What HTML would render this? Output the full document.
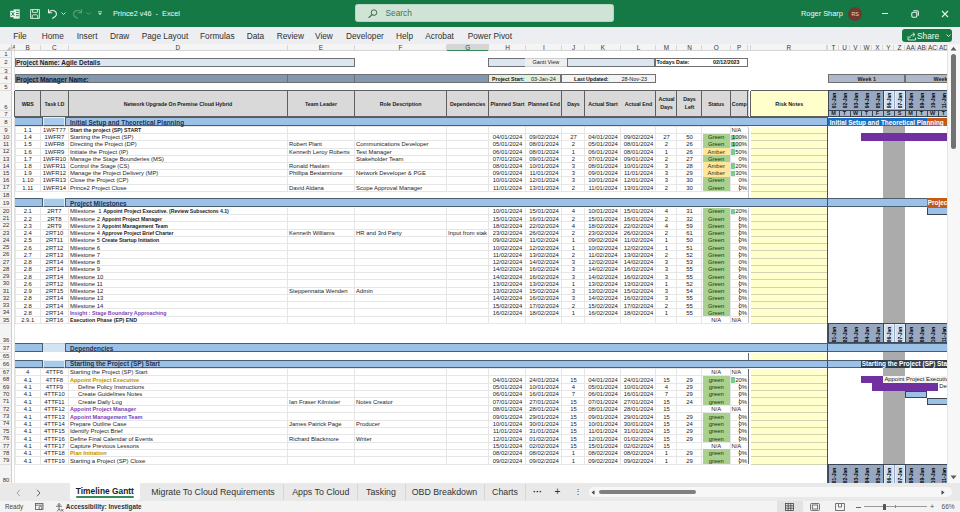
<!DOCTYPE html><html><head><meta charset="utf-8"><style>
html,body{margin:0;padding:0;width:960px;height:512px;overflow:hidden;background:#fff;font-family:"Liberation Sans",sans-serif;}
div{position:absolute;box-sizing:border-box;}
.t{white-space:nowrap;overflow:visible;}
</style></head><body>
<div style="left:0px;top:0px;width:960px;height:26.5px;background:#147945"></div>
<svg style="position:absolute;left:10px;top:8.5px" width="10" height="10" viewBox="0 0 10 10"><path d="M3.5 0.3h6.2v9.4H3.5z" fill="#d9f2e2"/><path d="M6 2.3h2.8M6 4.5h2.8M6 6.7h2.8" stroke="#147945" stroke-width="0.9"/><path d="M0.2 1.8h5.6v6.4H0.2z" fill="#e6f7ec"/><path d="M1.4 3l3 3.9M4.4 3l-3 3.9" stroke="#147945" stroke-width="0.95"/></svg>
<svg style="position:absolute;left:30px;top:8.5px" width="10" height="10" viewBox="0 0 10 10"><g fill="none" stroke="#d9f2e2" stroke-width="0.95"><path d="M0.6 0.6h8.8v8.8H0.6z"/><path d="M2.6 0.6v2.8h4.8V0.6"/><path d="M2.2 9.4V6.8c0-0.6 0.4-1 1-1h3.6c0.6 0 1 0.4 1 1v2.6"/></g></svg>
<svg style="position:absolute;left:47px;top:8px" width="11" height="11" viewBox="0 0 11 11"><g fill="none" stroke="#e8f3ec" stroke-width="1.1" stroke-linecap="round"><path d="M1.5 1.5v3.3h3.3"/><path d="M1.8 4.6C3 2.6 5.5 1.8 7.6 2.9c2.3 1.3 2.3 4.2 0.6 5.6L5.6 10.3"/></g></svg>
<svg style="position:absolute;left:61px;top:12px" width="5" height="3" viewBox="0 0 5 3"><path d="M0.5 0.5l2 2 2-2" fill="none" stroke="#e8f3ec" stroke-width="0.9"/></svg>
<svg style="position:absolute;left:72px;top:8px" width="11" height="11" viewBox="0 0 11 11"><g fill="none" stroke="#5ba27a" stroke-width="1.1" stroke-linecap="round"><path d="M9.5 1.5v3.3H6.2"/><path d="M9.2 4.6C8 2.6 5.5 1.8 3.4 2.9c-2.3 1.3-2.3 4.2-0.6 5.6L5.4 10.3"/></g></svg>
<svg style="position:absolute;left:86px;top:12px" width="5" height="3" viewBox="0 0 5 3"><path d="M0.5 0.5l2 2 2-2" fill="none" stroke="#5ba27a" stroke-width="0.9"/></svg>
<svg style="position:absolute;left:97px;top:11px" width="6" height="5" viewBox="0 0 6 5"><path d="M1 0.8h4" stroke="#e8f3ec" stroke-width="0.8"/><path d="M1.2 2.3l1.8 1.8 1.8-1.8z" fill="#e8f3ec"/></svg>
<div class="t" style="left:113px;top:5.8px;width:77px;height:16px;line-height:16px;font-size:7.3px;font-weight:400;color:#f4faf6;text-align:left;padding:0 0px;">Prince2 v46&nbsp; -&nbsp; Excel</div>
<div style="left:355.3px;top:4.1px;width:259px;height:18.1px;background:#cfe4d5;border-radius:2.5px;border:0.6px solid #b7d6c1"></div>
<svg style="position:absolute;left:368px;top:9px" width="10" height="9" viewBox="0 0 10 9"><circle cx="6" cy="3.6" r="2.8" fill="none" stroke="#3f6a4f" stroke-width="1"/><path d="M4 5.6L1 8.5" stroke="#3f6a4f" stroke-width="1.1" stroke-linecap="round"/></svg>
<div class="t" style="left:385.5px;top:4px;width:54.5px;height:18px;line-height:18px;font-size:8.3px;font-weight:400;color:#47705a;text-align:left;padding:0 0px;">Search</div>
<div class="t" style="left:801px;top:5.6px;width:44px;height:16px;line-height:16px;font-size:7.4px;font-weight:400;color:#f4faf6;text-align:left;padding:0 0px;">Roger Sharp</div>
<div style="left:848px;top:6.5px;width:14.4px;height:14.4px;border-radius:50%;background:#6d3a30;color:#f1d6d0;font-size:5.4px;line-height:14.4px;text-align:center;">RS</div>
<div style="left:881.8px;top:12.6px;width:6.6px;height:1.3px;background:#e8f3ec"></div>
<svg style="position:absolute;left:911px;top:9.5px" width="8" height="8" viewBox="0 0 8 8"><g fill="none" stroke="#e8f3ec" stroke-width="1.1"><rect x="0.8" y="2.2" width="5" height="5" rx="1.2"/><path d="M2.4 0.8h3.6a1.3 1.3 0 0 1 1.3 1.3v3.6"/></g></svg>
<svg style="position:absolute;left:941px;top:9.6px" width="8" height="8" viewBox="0 0 8 8"><path d="M1 1l6 6M7 1L1 7" stroke="#e8f3ec" stroke-width="1.1"/></svg>
<div style="left:0px;top:26.5px;width:960px;height:17.5px;background:#eceef1"></div>
<div class="t" style="left:13.3px;top:28.5px;width:80px;height:15px;line-height:15px;font-size:8.3px;font-weight:400;color:#303030;text-align:left;padding:0 0px;">File</div>
<div class="t" style="left:41.7px;top:28.5px;width:80px;height:15px;line-height:15px;font-size:8.3px;font-weight:400;color:#303030;text-align:left;padding:0 0px;">Home</div>
<div class="t" style="left:76.7px;top:28.5px;width:80px;height:15px;line-height:15px;font-size:8.3px;font-weight:400;color:#303030;text-align:left;padding:0 0px;">Insert</div>
<div class="t" style="left:110px;top:28.5px;width:80px;height:15px;line-height:15px;font-size:8.3px;font-weight:400;color:#303030;text-align:left;padding:0 0px;">Draw</div>
<div class="t" style="left:141.7px;top:28.5px;width:80px;height:15px;line-height:15px;font-size:8.3px;font-weight:400;color:#303030;text-align:left;padding:0 0px;">Page Layout</div>
<div class="t" style="left:200px;top:28.5px;width:80px;height:15px;line-height:15px;font-size:8.3px;font-weight:400;color:#303030;text-align:left;padding:0 0px;">Formulas</div>
<div class="t" style="left:246.7px;top:28.5px;width:80px;height:15px;line-height:15px;font-size:8.3px;font-weight:400;color:#303030;text-align:left;padding:0 0px;">Data</div>
<div class="t" style="left:276.7px;top:28.5px;width:80px;height:15px;line-height:15px;font-size:8.3px;font-weight:400;color:#303030;text-align:left;padding:0 0px;">Review</div>
<div class="t" style="left:315px;top:28.5px;width:80px;height:15px;line-height:15px;font-size:8.3px;font-weight:400;color:#303030;text-align:left;padding:0 0px;">View</div>
<div class="t" style="left:346px;top:28.5px;width:80px;height:15px;line-height:15px;font-size:8.3px;font-weight:400;color:#303030;text-align:left;padding:0 0px;">Developer</div>
<div class="t" style="left:396px;top:28.5px;width:80px;height:15px;line-height:15px;font-size:8.3px;font-weight:400;color:#303030;text-align:left;padding:0 0px;">Help</div>
<div class="t" style="left:425.3px;top:28.5px;width:80px;height:15px;line-height:15px;font-size:8.3px;font-weight:400;color:#303030;text-align:left;padding:0 0px;">Acrobat</div>
<div class="t" style="left:467.7px;top:28.5px;width:80px;height:15px;line-height:15px;font-size:8.3px;font-weight:400;color:#303030;text-align:left;padding:0 0px;">Power Pivot</div>
<div style="left:902.2px;top:29px;width:50px;height:12.8px;background:#137a43;border-radius:3px"></div>
<svg style="position:absolute;left:906.5px;top:30.5px" width="10" height="10" viewBox="0 0 10 10"><g fill="none" stroke="#e8f3ec" stroke-width="0.9" stroke-linejoin="round"><path d="M1 5.2v3.8h7.6V6.6"/><path d="M2.6 7.2c0.3-2.4 2-3.6 4.4-3.6"/><path d="M5.8 1.6L8 3.6 5.8 5.6"/></g></svg>
<div class="t" style="left:917px;top:29.8px;width:28px;height:12.8px;line-height:12.8px;font-size:8.3px;font-weight:400;color:#f4faf6;text-align:left;padding:0 0px;">Share</div>
<svg style="position:absolute;left:945.5px;top:34px" width="5" height="3" viewBox="0 0 5 3"><path d="M0.5 0.5l2 2 2-2" fill="none" stroke="#e8f3ec" stroke-width="0.9"/></svg>
<div style="left:0px;top:44px;width:947px;height:439px;background:#ffffff"></div>
<div style="left:0px;top:44px;width:947px;height:7px;background:#f4f4f4;border-bottom:0.7px solid #d4d4d4"></div>
<div style="left:446.5px;top:44px;width:42.5px;height:7px;background:#d6d6d6;border-bottom:1px solid #2f8a57"></div>
<div style="left:14px;top:45px;width:1px;height:6px;background:#d6d6d6"></div>
<div style="left:40px;top:45px;width:1px;height:6px;background:#d6d6d6"></div>
<div class="t" style="left:15px;top:43.6px;width:25.5px;height:7px;line-height:7px;font-size:6.4px;font-weight:400;color:#383838;text-align:center;padding:0 0px;">B</div>
<div style="left:68px;top:45px;width:1px;height:6px;background:#d6d6d6"></div>
<div class="t" style="left:40.5px;top:43.6px;width:27.8px;height:7px;line-height:7px;font-size:6.4px;font-weight:400;color:#383838;text-align:center;padding:0 0px;">C</div>
<div style="left:287px;top:45px;width:1px;height:6px;background:#d6d6d6"></div>
<div class="t" style="left:68.3px;top:43.6px;width:219.2px;height:7px;line-height:7px;font-size:6.4px;font-weight:400;color:#383838;text-align:center;padding:0 0px;">D</div>
<div style="left:354px;top:45px;width:1px;height:6px;background:#d6d6d6"></div>
<div class="t" style="left:287.5px;top:43.6px;width:67px;height:7px;line-height:7px;font-size:6.4px;font-weight:400;color:#383838;text-align:center;padding:0 0px;">E</div>
<div style="left:446px;top:45px;width:1px;height:6px;background:#d6d6d6"></div>
<div class="t" style="left:354.5px;top:43.6px;width:92px;height:7px;line-height:7px;font-size:6.4px;font-weight:400;color:#383838;text-align:center;padding:0 0px;">F</div>
<div style="left:488px;top:45px;width:1px;height:6px;background:#d6d6d6"></div>
<div class="t" style="left:446.5px;top:43.6px;width:42.5px;height:7px;line-height:7px;font-size:6.4px;font-weight:400;color:#383838;text-align:center;padding:0 0px;">G</div>
<div style="left:525px;top:45px;width:1px;height:6px;background:#d6d6d6"></div>
<div class="t" style="left:489px;top:43.6px;width:37px;height:7px;line-height:7px;font-size:6.4px;font-weight:400;color:#383838;text-align:center;padding:0 0px;">H</div>
<div style="left:561px;top:45px;width:1px;height:6px;background:#d6d6d6"></div>
<div class="t" style="left:526px;top:43.6px;width:36px;height:7px;line-height:7px;font-size:6.4px;font-weight:400;color:#383838;text-align:center;padding:0 0px;">I</div>
<div style="left:584px;top:45px;width:1px;height:6px;background:#d6d6d6"></div>
<div class="t" style="left:562px;top:43.6px;width:23px;height:7px;line-height:7px;font-size:6.4px;font-weight:400;color:#383838;text-align:center;padding:0 0px;">J</div>
<div style="left:620px;top:45px;width:1px;height:6px;background:#d6d6d6"></div>
<div class="t" style="left:585px;top:43.6px;width:36px;height:7px;line-height:7px;font-size:6.4px;font-weight:400;color:#383838;text-align:center;padding:0 0px;">K</div>
<div style="left:655px;top:45px;width:1px;height:6px;background:#d6d6d6"></div>
<div class="t" style="left:621px;top:43.6px;width:35px;height:7px;line-height:7px;font-size:6.4px;font-weight:400;color:#383838;text-align:center;padding:0 0px;">L</div>
<div style="left:676px;top:45px;width:1px;height:6px;background:#d6d6d6"></div>
<div class="t" style="left:656px;top:43.6px;width:21px;height:7px;line-height:7px;font-size:6.4px;font-weight:400;color:#383838;text-align:center;padding:0 0px;">M</div>
<div style="left:701px;top:45px;width:1px;height:6px;background:#d6d6d6"></div>
<div class="t" style="left:677px;top:43.6px;width:25px;height:7px;line-height:7px;font-size:6.4px;font-weight:400;color:#383838;text-align:center;padding:0 0px;">N</div>
<div style="left:730px;top:45px;width:1px;height:6px;background:#d6d6d6"></div>
<div class="t" style="left:702px;top:43.6px;width:28.4px;height:7px;line-height:7px;font-size:6.4px;font-weight:400;color:#383838;text-align:center;padding:0 0px;">O</div>
<div style="left:747px;top:45px;width:1px;height:6px;background:#d6d6d6"></div>
<div class="t" style="left:730.4px;top:43.6px;width:17.6px;height:7px;line-height:7px;font-size:6.4px;font-weight:400;color:#383838;text-align:center;padding:0 0px;">P</div>
<div style="left:750px;top:45px;width:1px;height:6px;background:#d6d6d6"></div>
<div style="left:826px;top:45px;width:1px;height:6px;background:#d6d6d6"></div>
<div class="t" style="left:750.5px;top:43.6px;width:76.5px;height:7px;line-height:7px;font-size:6.4px;font-weight:400;color:#383838;text-align:center;padding:0 0px;">R</div>
<div style="left:827px;top:45px;width:1px;height:6px;background:#d6d6d6"></div>
<div style="left:838px;top:45px;width:1px;height:6px;background:#d6d6d6"></div>
<div class="t" style="left:828px;top:43.6px;width:11px;height:7px;line-height:7px;font-size:6.4px;font-weight:400;color:#383838;text-align:center;padding:0 0px;">T</div>
<div style="left:849px;top:45px;width:1px;height:6px;background:#d6d6d6"></div>
<div class="t" style="left:839px;top:43.6px;width:11px;height:7px;line-height:7px;font-size:6.4px;font-weight:400;color:#383838;text-align:center;padding:0 0px;">U</div>
<div style="left:860px;top:45px;width:1px;height:6px;background:#d6d6d6"></div>
<div class="t" style="left:850px;top:43.6px;width:11px;height:7px;line-height:7px;font-size:6.4px;font-weight:400;color:#383838;text-align:center;padding:0 0px;">V</div>
<div style="left:871px;top:45px;width:1px;height:6px;background:#d6d6d6"></div>
<div class="t" style="left:861px;top:43.6px;width:11px;height:7px;line-height:7px;font-size:6.4px;font-weight:400;color:#383838;text-align:center;padding:0 0px;">W</div>
<div style="left:882px;top:45px;width:1px;height:6px;background:#d6d6d6"></div>
<div class="t" style="left:872px;top:43.6px;width:11px;height:7px;line-height:7px;font-size:6.4px;font-weight:400;color:#383838;text-align:center;padding:0 0px;">X</div>
<div style="left:893px;top:45px;width:1px;height:6px;background:#d6d6d6"></div>
<div class="t" style="left:883px;top:43.6px;width:11px;height:7px;line-height:7px;font-size:6.4px;font-weight:400;color:#383838;text-align:center;padding:0 0px;">Y</div>
<div style="left:904px;top:45px;width:1px;height:6px;background:#d6d6d6"></div>
<div class="t" style="left:894px;top:43.6px;width:11px;height:7px;line-height:7px;font-size:6.4px;font-weight:400;color:#383838;text-align:center;padding:0 0px;">Z</div>
<div style="left:915px;top:45px;width:1px;height:6px;background:#d6d6d6"></div>
<div class="t" style="left:905px;top:43.6px;width:11px;height:7px;line-height:7px;font-size:6.4px;font-weight:400;color:#383838;text-align:center;padding:0 0px;">AA</div>
<div style="left:926px;top:45px;width:1px;height:6px;background:#d6d6d6"></div>
<div class="t" style="left:916px;top:43.6px;width:11px;height:7px;line-height:7px;font-size:6.4px;font-weight:400;color:#383838;text-align:center;padding:0 0px;">AB</div>
<div style="left:937px;top:45px;width:1px;height:6px;background:#d6d6d6"></div>
<div class="t" style="left:927px;top:43.6px;width:11px;height:7px;line-height:7px;font-size:6.4px;font-weight:400;color:#383838;text-align:center;padding:0 0px;">AC</div>
<div style="left:948px;top:45px;width:1px;height:6px;background:#d6d6d6"></div>
<div class="t" style="left:938px;top:43.6px;width:11px;height:7px;line-height:7px;font-size:6.4px;font-weight:400;color:#383838;text-align:center;padding:0 0px;">AD</div>
<div class="t" style="left:12.3px;top:44px;width:2.7px;height:7px;line-height:7px;font-size:5.5px;font-weight:400;color:#454545;text-align:left;padding:0 0px;overflow:hidden">A</div>
<svg style="position:absolute;left:5px;top:46px" width="6" height="5" viewBox="0 0 6 5"><path d="M5.5 0.5v4h-4z" fill="#b8b8b8"/></svg>
<div style="left:0px;top:51px;width:12px;height:432px;background:#f4f4f4"></div>
<div style="left:11px;top:44px;width:1px;height:439px;background:#cdcdcd"></div>
<div style="left:14px;top:51px;width:1px;height:432px;background:#e2e2e2"></div>
<div style="left:0px;top:57px;width:12px;height:1px;background:#dedede"></div>
<div class="t" style="left:0px;top:50.7px;width:12px;height:7.4px;line-height:7.4px;font-size:6px;font-weight:400;color:#333;text-align:center;padding:0 0px;">1</div>
<div style="left:0px;top:67px;width:12px;height:1px;background:#dedede"></div>
<div class="t" style="left:0px;top:58.1px;width:12px;height:9.7px;line-height:9.7px;font-size:6px;font-weight:400;color:#333;text-align:center;padding:0 0px;">2</div>
<div style="left:0px;top:73px;width:12px;height:1px;background:#dedede"></div>
<div class="t" style="left:0px;top:67.8px;width:12px;height:6.4px;line-height:6.4px;font-size:6px;font-weight:400;color:#333;text-align:center;padding:0 0px;">3</div>
<div style="left:0px;top:83px;width:12px;height:1px;background:#dedede"></div>
<div class="t" style="left:0px;top:74.2px;width:12px;height:9.7px;line-height:9.7px;font-size:6px;font-weight:400;color:#333;text-align:center;padding:0 0px;">4</div>
<div style="left:0px;top:90px;width:12px;height:1px;background:#dedede"></div>
<div class="t" style="left:0px;top:83.9px;width:12px;height:6.9px;line-height:6.9px;font-size:6px;font-weight:400;color:#333;text-align:center;padding:0 0px;">5</div>
<div style="left:0px;top:110px;width:12px;height:1px;background:#dedede"></div>
<div class="t" style="left:0px;top:103.8px;width:12px;height:7.5px;line-height:7.5px;font-size:6px;font-weight:400;color:#333;text-align:center;padding:0 0px;">6</div>
<div style="left:0px;top:117px;width:12px;height:1px;background:#dedede"></div>
<div class="t" style="left:0px;top:110.6px;width:12px;height:7.1px;line-height:7.1px;font-size:6px;font-weight:400;color:#333;text-align:center;padding:0 0px;">7</div>
<div style="left:0px;top:126px;width:12px;height:1px;background:#dedede"></div>
<div class="t" style="left:0px;top:117.7px;width:12px;height:9.2px;line-height:9.2px;font-size:6px;font-weight:400;color:#333;text-align:center;padding:0 0px;">8</div>
<div style="left:0px;top:133px;width:12px;height:1px;background:#dedede"></div>
<div class="t" style="left:0px;top:126.9px;width:12px;height:7.19px;line-height:7.19px;font-size:6px;font-weight:400;color:#333;text-align:center;padding:0 0px;">9</div>
<div style="left:0px;top:140px;width:12px;height:1px;background:#dedede"></div>
<div class="t" style="left:0px;top:134.09px;width:12px;height:7.19px;line-height:7.19px;font-size:6px;font-weight:400;color:#333;text-align:center;padding:0 0px;">10</div>
<div style="left:0px;top:148px;width:12px;height:1px;background:#dedede"></div>
<div class="t" style="left:0px;top:141.28px;width:12px;height:7.19px;line-height:7.19px;font-size:6px;font-weight:400;color:#333;text-align:center;padding:0 0px;">11</div>
<div style="left:0px;top:155px;width:12px;height:1px;background:#dedede"></div>
<div class="t" style="left:0px;top:148.47px;width:12px;height:7.19px;line-height:7.19px;font-size:6px;font-weight:400;color:#333;text-align:center;padding:0 0px;">12</div>
<div style="left:0px;top:162px;width:12px;height:1px;background:#dedede"></div>
<div class="t" style="left:0px;top:155.66px;width:12px;height:7.19px;line-height:7.19px;font-size:6px;font-weight:400;color:#333;text-align:center;padding:0 0px;">13</div>
<div style="left:0px;top:169px;width:12px;height:1px;background:#dedede"></div>
<div class="t" style="left:0px;top:162.85px;width:12px;height:7.19px;line-height:7.19px;font-size:6px;font-weight:400;color:#333;text-align:center;padding:0 0px;">14</div>
<div style="left:0px;top:176px;width:12px;height:1px;background:#dedede"></div>
<div class="t" style="left:0px;top:170.04px;width:12px;height:7.19px;line-height:7.19px;font-size:6px;font-weight:400;color:#333;text-align:center;padding:0 0px;">15</div>
<div style="left:0px;top:184px;width:12px;height:1px;background:#dedede"></div>
<div class="t" style="left:0px;top:177.23px;width:12px;height:7.19px;line-height:7.19px;font-size:6px;font-weight:400;color:#333;text-align:center;padding:0 0px;">16</div>
<div style="left:0px;top:191px;width:12px;height:1px;background:#dedede"></div>
<div class="t" style="left:0px;top:184.42px;width:12px;height:7.19px;line-height:7.19px;font-size:6px;font-weight:400;color:#333;text-align:center;padding:0 0px;">17</div>
<div style="left:0px;top:198px;width:12px;height:1px;background:#dedede"></div>
<div class="t" style="left:0px;top:191.61px;width:12px;height:7.09px;line-height:7.09px;font-size:6px;font-weight:400;color:#333;text-align:center;padding:0 0px;">18</div>
<div style="left:0px;top:207px;width:12px;height:1px;background:#dedede"></div>
<div class="t" style="left:0px;top:198.7px;width:12px;height:9.2px;line-height:9.2px;font-size:6px;font-weight:400;color:#333;text-align:center;padding:0 0px;">19</div>
<div style="left:0px;top:214px;width:12px;height:1px;background:#dedede"></div>
<div class="t" style="left:0px;top:207.9px;width:12px;height:7.24px;line-height:7.24px;font-size:6px;font-weight:400;color:#333;text-align:center;padding:0 0px;">20</div>
<div style="left:0px;top:221px;width:12px;height:1px;background:#dedede"></div>
<div class="t" style="left:0px;top:215.14px;width:12px;height:7.24px;line-height:7.24px;font-size:6px;font-weight:400;color:#333;text-align:center;padding:0 0px;">21</div>
<div style="left:0px;top:229px;width:12px;height:1px;background:#dedede"></div>
<div class="t" style="left:0px;top:222.38px;width:12px;height:7.24px;line-height:7.24px;font-size:6px;font-weight:400;color:#333;text-align:center;padding:0 0px;">22</div>
<div style="left:0px;top:236px;width:12px;height:1px;background:#dedede"></div>
<div class="t" style="left:0px;top:229.62px;width:12px;height:7.24px;line-height:7.24px;font-size:6px;font-weight:400;color:#333;text-align:center;padding:0 0px;">23</div>
<div style="left:0px;top:243px;width:12px;height:1px;background:#dedede"></div>
<div class="t" style="left:0px;top:236.86px;width:12px;height:7.24px;line-height:7.24px;font-size:6px;font-weight:400;color:#333;text-align:center;padding:0 0px;">24</div>
<div style="left:0px;top:250px;width:12px;height:1px;background:#dedede"></div>
<div class="t" style="left:0px;top:244.1px;width:12px;height:7.24px;line-height:7.24px;font-size:6px;font-weight:400;color:#333;text-align:center;padding:0 0px;">25</div>
<div style="left:0px;top:258px;width:12px;height:1px;background:#dedede"></div>
<div class="t" style="left:0px;top:251.34px;width:12px;height:7.24px;line-height:7.24px;font-size:6px;font-weight:400;color:#333;text-align:center;padding:0 0px;">26</div>
<div style="left:0px;top:265px;width:12px;height:1px;background:#dedede"></div>
<div class="t" style="left:0px;top:258.58px;width:12px;height:7.24px;line-height:7.24px;font-size:6px;font-weight:400;color:#333;text-align:center;padding:0 0px;">27</div>
<div style="left:0px;top:272px;width:12px;height:1px;background:#dedede"></div>
<div class="t" style="left:0px;top:265.82px;width:12px;height:7.24px;line-height:7.24px;font-size:6px;font-weight:400;color:#333;text-align:center;padding:0 0px;">28</div>
<div style="left:0px;top:279px;width:12px;height:1px;background:#dedede"></div>
<div class="t" style="left:0px;top:273.06px;width:12px;height:7.24px;line-height:7.24px;font-size:6px;font-weight:400;color:#333;text-align:center;padding:0 0px;">29</div>
<div style="left:0px;top:287px;width:12px;height:1px;background:#dedede"></div>
<div class="t" style="left:0px;top:280.3px;width:12px;height:7.24px;line-height:7.24px;font-size:6px;font-weight:400;color:#333;text-align:center;padding:0 0px;">30</div>
<div style="left:0px;top:294px;width:12px;height:1px;background:#dedede"></div>
<div class="t" style="left:0px;top:287.54px;width:12px;height:7.24px;line-height:7.24px;font-size:6px;font-weight:400;color:#333;text-align:center;padding:0 0px;">31</div>
<div style="left:0px;top:301px;width:12px;height:1px;background:#dedede"></div>
<div class="t" style="left:0px;top:294.78px;width:12px;height:7.24px;line-height:7.24px;font-size:6px;font-weight:400;color:#333;text-align:center;padding:0 0px;">32</div>
<div style="left:0px;top:308px;width:12px;height:1px;background:#dedede"></div>
<div class="t" style="left:0px;top:302.02px;width:12px;height:7.24px;line-height:7.24px;font-size:6px;font-weight:400;color:#333;text-align:center;padding:0 0px;">33</div>
<div style="left:0px;top:316px;width:12px;height:1px;background:#dedede"></div>
<div class="t" style="left:0px;top:309.26px;width:12px;height:7.24px;line-height:7.24px;font-size:6px;font-weight:400;color:#333;text-align:center;padding:0 0px;">34</div>
<div style="left:0px;top:323px;width:12px;height:1px;background:#dedede"></div>
<div class="t" style="left:0px;top:316.5px;width:12px;height:7.24px;line-height:7.24px;font-size:6px;font-weight:400;color:#333;text-align:center;padding:0 0px;">35</div>
<div style="left:0px;top:343px;width:12px;height:1px;background:#dedede"></div>
<div class="t" style="left:0px;top:336.9px;width:12px;height:7.5px;line-height:7.5px;font-size:6px;font-weight:400;color:#333;text-align:center;padding:0 0px;">36</div>
<div style="left:0px;top:352px;width:12px;height:1px;background:#dedede"></div>
<div class="t" style="left:0px;top:343.7px;width:12px;height:9.2px;line-height:9.2px;font-size:6px;font-weight:400;color:#333;text-align:center;padding:0 0px;">37</div>
<div style="left:0px;top:359px;width:12px;height:1px;background:#dedede"></div>
<div class="t" style="left:0px;top:352.9px;width:12px;height:7.1px;line-height:7.1px;font-size:6px;font-weight:400;color:#333;text-align:center;padding:0 0px;">65</div>
<div style="left:0px;top:368px;width:12px;height:1px;background:#dedede"></div>
<div class="t" style="left:0px;top:360px;width:12px;height:8.9px;line-height:8.9px;font-size:6px;font-weight:400;color:#333;text-align:center;padding:0 0px;">66</div>
<div style="left:0px;top:375px;width:12px;height:1px;background:#dedede"></div>
<div class="t" style="left:0px;top:368.9px;width:12px;height:7.36px;line-height:7.36px;font-size:6px;font-weight:400;color:#333;text-align:center;padding:0 0px;">67</div>
<div style="left:0px;top:383px;width:12px;height:1px;background:#dedede"></div>
<div class="t" style="left:0px;top:376.26px;width:12px;height:7.36px;line-height:7.36px;font-size:6px;font-weight:400;color:#333;text-align:center;padding:0 0px;">68</div>
<div style="left:0px;top:390px;width:12px;height:1px;background:#dedede"></div>
<div class="t" style="left:0px;top:383.62px;width:12px;height:7.36px;line-height:7.36px;font-size:6px;font-weight:400;color:#333;text-align:center;padding:0 0px;">69</div>
<div style="left:0px;top:397px;width:12px;height:1px;background:#dedede"></div>
<div class="t" style="left:0px;top:390.98px;width:12px;height:7.36px;line-height:7.36px;font-size:6px;font-weight:400;color:#333;text-align:center;padding:0 0px;">70</div>
<div style="left:0px;top:405px;width:12px;height:1px;background:#dedede"></div>
<div class="t" style="left:0px;top:398.34px;width:12px;height:7.36px;line-height:7.36px;font-size:6px;font-weight:400;color:#333;text-align:center;padding:0 0px;">71</div>
<div style="left:0px;top:412px;width:12px;height:1px;background:#dedede"></div>
<div class="t" style="left:0px;top:405.7px;width:12px;height:7.36px;line-height:7.36px;font-size:6px;font-weight:400;color:#333;text-align:center;padding:0 0px;">72</div>
<div style="left:0px;top:420px;width:12px;height:1px;background:#dedede"></div>
<div class="t" style="left:0px;top:413.06px;width:12px;height:7.36px;line-height:7.36px;font-size:6px;font-weight:400;color:#333;text-align:center;padding:0 0px;">73</div>
<div style="left:0px;top:427px;width:12px;height:1px;background:#dedede"></div>
<div class="t" style="left:0px;top:420.42px;width:12px;height:7.36px;line-height:7.36px;font-size:6px;font-weight:400;color:#333;text-align:center;padding:0 0px;">74</div>
<div style="left:0px;top:434px;width:12px;height:1px;background:#dedede"></div>
<div class="t" style="left:0px;top:427.78px;width:12px;height:7.36px;line-height:7.36px;font-size:6px;font-weight:400;color:#333;text-align:center;padding:0 0px;">75</div>
<div style="left:0px;top:442px;width:12px;height:1px;background:#dedede"></div>
<div class="t" style="left:0px;top:435.14px;width:12px;height:7.36px;line-height:7.36px;font-size:6px;font-weight:400;color:#333;text-align:center;padding:0 0px;">76</div>
<div style="left:0px;top:449px;width:12px;height:1px;background:#dedede"></div>
<div class="t" style="left:0px;top:442.5px;width:12px;height:7.36px;line-height:7.36px;font-size:6px;font-weight:400;color:#333;text-align:center;padding:0 0px;">77</div>
<div style="left:0px;top:456px;width:12px;height:1px;background:#dedede"></div>
<div class="t" style="left:0px;top:449.86px;width:12px;height:7.36px;line-height:7.36px;font-size:6px;font-weight:400;color:#333;text-align:center;padding:0 0px;">78</div>
<div style="left:0px;top:464px;width:12px;height:1px;background:#dedede"></div>
<div class="t" style="left:0px;top:457.22px;width:12px;height:7.36px;line-height:7.36px;font-size:6px;font-weight:400;color:#333;text-align:center;padding:0 0px;">79</div>
<div style="left:0px;top:483px;width:12px;height:1px;background:#dedede"></div>
<div class="t" style="left:0px;top:476.6px;width:12px;height:7.5px;line-height:7.5px;font-size:6px;font-weight:400;color:#333;text-align:center;padding:0 0px;">80</div>
<div style="left:15px;top:57.7px;width:339.5px;height:9.7px;background:#dce6f2;border:0.8px solid #707070"></div>
<div class="t" style="left:15.5px;top:58px;width:184.5px;height:9.7px;line-height:9.7px;font-size:6.5px;font-weight:700;color:#1b1b2b;text-align:left;padding:0 0.5px;">Project Name: Agile Details</div>
<div style="left:488.2px;top:57.8px;width:37px;height:9.4px;background:#dce6f2;border:0.8px solid #707070;border-right:none"></div>
<div style="left:525.2px;top:57.8px;width:41.4px;height:9.4px;background:#efefef;border-top:0.9px solid #cfcfcf;border-bottom:0.9px solid #cfcfcf"></div>
<div class="t" style="left:525.2px;top:58.3px;width:41.4px;height:9.4px;line-height:9.4px;font-size:5.5px;font-weight:400;color:#222;text-align:center;padding:0 0px;">Gantt View</div>
<div style="left:566.6px;top:57.8px;width:88.4px;height:9.4px;background:#dce6f2;border:0.8px solid #707070"></div>
<div style="left:655px;top:57.8px;width:93.2px;height:9.4px;background:#ffffff;border:0.8px solid #707070"></div>
<div class="t" style="left:656px;top:58.3px;width:44px;height:9.4px;line-height:9.4px;font-size:5.3px;font-weight:700;color:#111;text-align:left;padding:0 0.5px;">Todays Date:</div>
<div class="t" style="left:700px;top:58.3px;width:47px;height:9.4px;line-height:9.4px;font-size:5.3px;font-weight:700;color:#111;text-align:right;padding:0 7.5px;">02/12/2023</div>
<div style="left:15px;top:73.9px;width:473.5px;height:9.3px;background:#8497b0;border:0.8px solid #707070"></div>
<div style="left:287.2px;top:73.9px;width:0.8px;height:9.3px;background:#707070"></div>
<div style="left:354.2px;top:73.9px;width:0.8px;height:9.3px;background:#707070"></div>
<div class="t" style="left:15.5px;top:74.5px;width:184.5px;height:9.3px;line-height:9.3px;font-size:6.55px;font-weight:700;color:#101828;text-align:left;padding:0 0.5px;">Project Manager Name:</div>
<div style="left:488.2px;top:73.9px;width:72.8px;height:9.3px;background:#e2efda;border:0.8px solid #707070"></div>
<div class="t" style="left:488.5px;top:74.7px;width:41.5px;height:9.3px;line-height:9.3px;font-size:5.2px;font-weight:700;color:#111;text-align:left;padding:0 3.5px;">Project Start:</div>
<div class="t" style="left:528px;top:74.7px;width:32px;height:9.3px;line-height:9.3px;font-size:5.5px;font-weight:400;color:#222;text-align:left;padding:0 3px;">03-Jan-24</div>
<div style="left:561px;top:73.9px;width:94.8px;height:9.3px;background:#f3f3f3;border:0.8px solid #707070"></div>
<div class="t" style="left:561px;top:74.7px;width:51px;height:9.3px;line-height:9.3px;font-size:5.2px;font-weight:700;color:#111;text-align:left;padding:0 13px;">Last Updated:</div>
<div class="t" style="left:612px;top:74.7px;width:43px;height:9.3px;line-height:9.3px;font-size:5.5px;font-weight:400;color:#222;text-align:left;padding:0 9.4px;">28-Nov-23</div>
<div style="left:828.2px;top:74.2px;width:77.1px;height:9px;background:#adb9ca;border:0.8px solid #707070"></div>
<div class="t" style="left:828.2px;top:75px;width:77.1px;height:9px;line-height:9px;font-size:5.4px;font-weight:700;color:#1a1a1a;text-align:center;padding:0 0px;">Week 1</div>
<div style="left:905.3px;top:74.2px;width:54.7px;height:9px;background:#adb9ca;border:0.8px solid #707070"></div>
<div class="t" style="left:905.3px;top:75px;width:74.7px;height:9px;line-height:9px;font-size:5.4px;font-weight:700;color:#1a1a1a;text-align:center;padding:0 0px;">Week 2</div>
<div style="left:15px;top:90.5px;width:733.6px;height:26.7px;background:#d9d9d9"></div>
<div style="left:15px;top:90px;width:733.6px;height:1px;background:#5f5f5f"></div>
<div style="left:15px;top:116px;width:733.6px;height:1px;background:#5f5f5f"></div>
<div style="left:14px;top:90.5px;width:1px;height:26.7px;background:#5f5f5f"></div>
<div style="left:40px;top:90.5px;width:1px;height:26.7px;background:#5f5f5f"></div>
<div style="left:68px;top:90.5px;width:1px;height:26.7px;background:#5f5f5f"></div>
<div style="left:287px;top:90.5px;width:1px;height:26.7px;background:#5f5f5f"></div>
<div style="left:354px;top:90.5px;width:1px;height:26.7px;background:#5f5f5f"></div>
<div style="left:446px;top:90.5px;width:1px;height:26.7px;background:#5f5f5f"></div>
<div style="left:488px;top:90.5px;width:1px;height:26.7px;background:#5f5f5f"></div>
<div style="left:561px;top:90.5px;width:1px;height:26.7px;background:#5f5f5f"></div>
<div style="left:584px;top:90.5px;width:1px;height:26.7px;background:#5f5f5f"></div>
<div style="left:655px;top:90.5px;width:1px;height:26.7px;background:#5f5f5f"></div>
<div style="left:676px;top:90.5px;width:1px;height:26.7px;background:#5f5f5f"></div>
<div style="left:701px;top:90.5px;width:1px;height:26.7px;background:#5f5f5f"></div>
<div style="left:730px;top:90.5px;width:1px;height:26.7px;background:#5f5f5f"></div>
<div style="left:747px;top:90.5px;width:1px;height:26.7px;background:#5f5f5f"></div>
<div class="t" style="left:15px;top:90.5px;width:25.5px;height:20.7px;line-height:20.7px;font-size:5.25px;font-weight:700;color:#1a1a1a;text-align:center;padding:0 0px;line-height:20px;top:93.5px;height:20px">WBS</div>
<div class="t" style="left:40.5px;top:90.5px;width:27.8px;height:20.7px;line-height:20.7px;font-size:5.25px;font-weight:700;color:#1a1a1a;text-align:center;padding:0 0px;line-height:20px;top:93.5px;height:20px">Task I.D</div>
<div class="t" style="left:68.3px;top:90.5px;width:219.2px;height:20.7px;line-height:20.7px;font-size:5.25px;font-weight:700;color:#1a1a1a;text-align:center;padding:0 0px;line-height:20px;top:93.5px;height:20px">Network Upgrade On Premise Cloud Hybrid</div>
<div class="t" style="left:287.5px;top:90.5px;width:67px;height:20.7px;line-height:20.7px;font-size:5.25px;font-weight:700;color:#1a1a1a;text-align:center;padding:0 0px;line-height:20px;top:93.5px;height:20px">Team Leader</div>
<div class="t" style="left:354.5px;top:90.5px;width:92px;height:20.7px;line-height:20.7px;font-size:5.25px;font-weight:700;color:#1a1a1a;text-align:center;padding:0 0px;line-height:20px;top:93.5px;height:20px">Role Description</div>
<div class="t" style="left:446.5px;top:90.5px;width:42.5px;height:20.7px;line-height:20.7px;font-size:5.25px;font-weight:700;color:#1a1a1a;text-align:center;padding:0 0px;overflow:hidden;line-height:20px;top:93.5px;height:20px">Dependencies</div>
<div class="t" style="left:489px;top:93.5px;width:37px;height:20px;line-height:20px;font-size:5.25px;font-weight:700;color:#1a1a1a;text-align:center;padding:0 0px;line-height:20px">Planned Start</div>
<div class="t" style="left:526px;top:93.5px;width:36px;height:20px;line-height:20px;font-size:5.25px;font-weight:700;color:#1a1a1a;text-align:center;padding:0 0px;line-height:20px">Planned End</div>
<div class="t" style="left:562px;top:93.5px;width:23px;height:20px;line-height:20px;font-size:5.25px;font-weight:700;color:#1a1a1a;text-align:center;padding:0 0px;line-height:20px">Days</div>
<div class="t" style="left:585px;top:93.5px;width:36px;height:20px;line-height:20px;font-size:5.25px;font-weight:700;color:#1a1a1a;text-align:center;padding:0 0px;line-height:20px">Actual Start</div>
<div class="t" style="left:621px;top:93.5px;width:35px;height:20px;line-height:20px;font-size:5.25px;font-weight:700;color:#1a1a1a;text-align:center;padding:0 0px;line-height:20px">Actual End</div>
<div class="t" style="left:656px;top:96.3px;width:21px;font-size:5.25px;line-height:7.4px;font-weight:700;color:#1a1a1a;text-align:center">Actual<br>Days</div>
<div class="t" style="left:677px;top:96.3px;width:25px;font-size:5.25px;line-height:7.4px;font-weight:700;color:#1a1a1a;text-align:center">Days<br>Left</div>
<div class="t" style="left:702px;top:93.5px;width:28.4px;height:20px;line-height:20px;font-size:5.25px;font-weight:700;color:#1a1a1a;text-align:center;padding:0 0px;line-height:20px">Status</div>
<div class="t" style="left:730.4px;top:93.5px;width:17.6px;height:20px;line-height:20px;font-size:5.25px;font-weight:700;color:#1a1a1a;text-align:center;padding:0 0px;line-height:20px">Comp</div>
<div style="left:750.5px;top:90.5px;width:77.5px;height:26.7px;background:#ffffcc"></div>
<div style="left:750.5px;top:90px;width:77.5px;height:1px;background:#5f5f5f"></div>
<div style="left:750.5px;top:116px;width:77.5px;height:1px;background:#5f5f5f"></div>
<div style="left:750px;top:90.5px;width:1px;height:26.7px;background:#5f5f5f"></div>
<div class="t" style="left:750.5px;top:93.5px;width:77.5px;height:20px;line-height:20px;font-size:5.4px;font-weight:700;color:#1a1a1a;text-align:center;padding:0 0px;line-height:20px">Risk Notes</div>
<div style="left:750.5px;top:126.5px;width:76.1px;height:71.8px;background:#ffffcc"></div>
<div style="left:750.5px;top:207.5px;width:76.1px;height:115.84px;background:#ffffcc"></div>
<div style="left:750.5px;top:352.5px;width:76.1px;height:7.1px;background:#ffffcc"></div>
<div style="left:750.5px;top:368.5px;width:76.1px;height:95.68px;background:#ffffcc"></div>
<div style="left:15px;top:133px;width:733px;height:1px;background:#e6e6e6"></div>
<div style="left:750.5px;top:133px;width:76.1px;height:1px;background:#d2d2b4"></div>
<div style="left:15px;top:140px;width:733px;height:1px;background:#e6e6e6"></div>
<div style="left:750.5px;top:140px;width:76.1px;height:1px;background:#d2d2b4"></div>
<div style="left:15px;top:148px;width:733px;height:1px;background:#e6e6e6"></div>
<div style="left:750.5px;top:148px;width:76.1px;height:1px;background:#d2d2b4"></div>
<div style="left:15px;top:155px;width:733px;height:1px;background:#e6e6e6"></div>
<div style="left:750.5px;top:155px;width:76.1px;height:1px;background:#d2d2b4"></div>
<div style="left:15px;top:162px;width:733px;height:1px;background:#e6e6e6"></div>
<div style="left:750.5px;top:162px;width:76.1px;height:1px;background:#d2d2b4"></div>
<div style="left:15px;top:169px;width:733px;height:1px;background:#e6e6e6"></div>
<div style="left:750.5px;top:169px;width:76.1px;height:1px;background:#d2d2b4"></div>
<div style="left:15px;top:176px;width:733px;height:1px;background:#e6e6e6"></div>
<div style="left:750.5px;top:176px;width:76.1px;height:1px;background:#d2d2b4"></div>
<div style="left:15px;top:184px;width:733px;height:1px;background:#e6e6e6"></div>
<div style="left:750.5px;top:184px;width:76.1px;height:1px;background:#d2d2b4"></div>
<div style="left:738.5px;top:185.02px;width:0;height:5.69px;border-left:0.8px dotted #8a8a8a"></div>
<div style="left:15px;top:191px;width:733px;height:1px;background:#e6e6e6"></div>
<div style="left:750.5px;top:191px;width:76.1px;height:1px;background:#d2d2b4"></div>
<div style="left:750.5px;top:198px;width:76.1px;height:1px;background:#d2d2b4"></div>
<div style="left:15px;top:214px;width:733px;height:1px;background:#e6e6e6"></div>
<div style="left:750.5px;top:214px;width:76.1px;height:1px;background:#d2d2b4"></div>
<div style="left:738.5px;top:215.74px;width:0;height:5.74px;border-left:0.8px dotted #8a8a8a"></div>
<div style="left:15px;top:221px;width:733px;height:1px;background:#e6e6e6"></div>
<div style="left:750.5px;top:221px;width:76.1px;height:1px;background:#d2d2b4"></div>
<div style="left:738.5px;top:222.98px;width:0;height:5.74px;border-left:0.8px dotted #8a8a8a"></div>
<div style="left:15px;top:229px;width:733px;height:1px;background:#e6e6e6"></div>
<div style="left:750.5px;top:229px;width:76.1px;height:1px;background:#d2d2b4"></div>
<div style="left:738.5px;top:230.22px;width:0;height:5.74px;border-left:0.8px dotted #8a8a8a"></div>
<div style="left:15px;top:236px;width:733px;height:1px;background:#e6e6e6"></div>
<div style="left:750.5px;top:236px;width:76.1px;height:1px;background:#d2d2b4"></div>
<div style="left:738.5px;top:237.46px;width:0;height:5.74px;border-left:0.8px dotted #8a8a8a"></div>
<div style="left:15px;top:243px;width:733px;height:1px;background:#e6e6e6"></div>
<div style="left:750.5px;top:243px;width:76.1px;height:1px;background:#d2d2b4"></div>
<div style="left:15px;top:250px;width:733px;height:1px;background:#e6e6e6"></div>
<div style="left:750.5px;top:250px;width:76.1px;height:1px;background:#d2d2b4"></div>
<div style="left:738.5px;top:251.94px;width:0;height:5.74px;border-left:0.8px dotted #8a8a8a"></div>
<div style="left:15px;top:258px;width:733px;height:1px;background:#e6e6e6"></div>
<div style="left:750.5px;top:258px;width:76.1px;height:1px;background:#d2d2b4"></div>
<div style="left:15px;top:265px;width:733px;height:1px;background:#e6e6e6"></div>
<div style="left:750.5px;top:265px;width:76.1px;height:1px;background:#d2d2b4"></div>
<div style="left:738.5px;top:266.42px;width:0;height:5.74px;border-left:0.8px dotted #8a8a8a"></div>
<div style="left:15px;top:272px;width:733px;height:1px;background:#e6e6e6"></div>
<div style="left:750.5px;top:272px;width:76.1px;height:1px;background:#d2d2b4"></div>
<div style="left:738.5px;top:273.66px;width:0;height:5.74px;border-left:0.8px dotted #8a8a8a"></div>
<div style="left:15px;top:279px;width:733px;height:1px;background:#e6e6e6"></div>
<div style="left:750.5px;top:279px;width:76.1px;height:1px;background:#d2d2b4"></div>
<div style="left:738.5px;top:280.9px;width:0;height:5.74px;border-left:0.8px dotted #8a8a8a"></div>
<div style="left:15px;top:287px;width:733px;height:1px;background:#e6e6e6"></div>
<div style="left:750.5px;top:287px;width:76.1px;height:1px;background:#d2d2b4"></div>
<div style="left:738.5px;top:288.14px;width:0;height:5.74px;border-left:0.8px dotted #8a8a8a"></div>
<div style="left:15px;top:294px;width:733px;height:1px;background:#e6e6e6"></div>
<div style="left:750.5px;top:294px;width:76.1px;height:1px;background:#d2d2b4"></div>
<div style="left:738.5px;top:295.38px;width:0;height:5.74px;border-left:0.8px dotted #8a8a8a"></div>
<div style="left:15px;top:301px;width:733px;height:1px;background:#e6e6e6"></div>
<div style="left:750.5px;top:301px;width:76.1px;height:1px;background:#d2d2b4"></div>
<div style="left:738.5px;top:302.62px;width:0;height:5.74px;border-left:0.8px dotted #8a8a8a"></div>
<div style="left:15px;top:308px;width:733px;height:1px;background:#e6e6e6"></div>
<div style="left:750.5px;top:308px;width:76.1px;height:1px;background:#d2d2b4"></div>
<div style="left:738.5px;top:309.86px;width:0;height:5.74px;border-left:0.8px dotted #8a8a8a"></div>
<div style="left:15px;top:316px;width:733px;height:1px;background:#e6e6e6"></div>
<div style="left:750.5px;top:316px;width:76.1px;height:1px;background:#d2d2b4"></div>
<div style="left:15px;top:323px;width:733px;height:1px;background:#e6e6e6"></div>
<div style="left:750.5px;top:323px;width:76.1px;height:1px;background:#d2d2b4"></div>
<div style="left:15px;top:375px;width:733px;height:1px;background:#e6e6e6"></div>
<div style="left:750.5px;top:375px;width:76.1px;height:1px;background:#d2d2b4"></div>
<div style="left:15px;top:383px;width:733px;height:1px;background:#e6e6e6"></div>
<div style="left:750.5px;top:383px;width:76.1px;height:1px;background:#d2d2b4"></div>
<div style="left:738.5px;top:384.22px;width:0;height:5.86px;border-left:0.8px dotted #8a8a8a"></div>
<div style="left:15px;top:390px;width:733px;height:1px;background:#e6e6e6"></div>
<div style="left:750.5px;top:390px;width:76.1px;height:1px;background:#d2d2b4"></div>
<div style="left:738.5px;top:391.58px;width:0;height:5.86px;border-left:0.8px dotted #8a8a8a"></div>
<div style="left:15px;top:397px;width:733px;height:1px;background:#e6e6e6"></div>
<div style="left:750.5px;top:397px;width:76.1px;height:1px;background:#d2d2b4"></div>
<div style="left:738.5px;top:398.94px;width:0;height:5.86px;border-left:0.8px dotted #8a8a8a"></div>
<div style="left:15px;top:405px;width:733px;height:1px;background:#e6e6e6"></div>
<div style="left:750.5px;top:405px;width:76.1px;height:1px;background:#d2d2b4"></div>
<div style="left:15px;top:412px;width:733px;height:1px;background:#e6e6e6"></div>
<div style="left:750.5px;top:412px;width:76.1px;height:1px;background:#d2d2b4"></div>
<div style="left:738.5px;top:413.66px;width:0;height:5.86px;border-left:0.8px dotted #8a8a8a"></div>
<div style="left:15px;top:420px;width:733px;height:1px;background:#e6e6e6"></div>
<div style="left:750.5px;top:420px;width:76.1px;height:1px;background:#d2d2b4"></div>
<div style="left:738.5px;top:421.02px;width:0;height:5.86px;border-left:0.8px dotted #8a8a8a"></div>
<div style="left:15px;top:427px;width:733px;height:1px;background:#e6e6e6"></div>
<div style="left:750.5px;top:427px;width:76.1px;height:1px;background:#d2d2b4"></div>
<div style="left:738.5px;top:428.38px;width:0;height:5.86px;border-left:0.8px dotted #8a8a8a"></div>
<div style="left:15px;top:434px;width:733px;height:1px;background:#e6e6e6"></div>
<div style="left:750.5px;top:434px;width:76.1px;height:1px;background:#d2d2b4"></div>
<div style="left:738.5px;top:435.74px;width:0;height:5.86px;border-left:0.8px dotted #8a8a8a"></div>
<div style="left:15px;top:442px;width:733px;height:1px;background:#e6e6e6"></div>
<div style="left:750.5px;top:442px;width:76.1px;height:1px;background:#d2d2b4"></div>
<div style="left:15px;top:449px;width:733px;height:1px;background:#e6e6e6"></div>
<div style="left:750.5px;top:449px;width:76.1px;height:1px;background:#d2d2b4"></div>
<div style="left:738.5px;top:450.46px;width:0;height:5.86px;border-left:0.8px dotted #8a8a8a"></div>
<div style="left:15px;top:456px;width:733px;height:1px;background:#e6e6e6"></div>
<div style="left:750.5px;top:456px;width:76.1px;height:1px;background:#d2d2b4"></div>
<div style="left:738.5px;top:457.82px;width:0;height:5.86px;border-left:0.8px dotted #8a8a8a"></div>
<div style="left:15px;top:464px;width:733px;height:1px;background:#e6e6e6"></div>
<div style="left:750.5px;top:464px;width:76.1px;height:1px;background:#d2d2b4"></div>
<div style="left:702.8px;top:133.69px;width:27px;height:7.39px;background:#a9d08e"></div>
<div style="left:731.2px;top:134.69px;width:3.5px;height:5.59px;background:#7ccb92"></div>
<div style="left:734.7px;top:134.69px;width:11.8px;height:5.59px;background:linear-gradient(90deg,#c4e6cd,#ffffff)"></div>
<div style="left:702.8px;top:140.88px;width:27px;height:7.39px;background:#a9d08e"></div>
<div style="left:731.2px;top:141.88px;width:3.5px;height:5.59px;background:#7ccb92"></div>
<div style="left:734.7px;top:141.88px;width:11.8px;height:5.59px;background:linear-gradient(90deg,#c4e6cd,#ffffff)"></div>
<div style="left:702.8px;top:148.07px;width:27px;height:7.39px;background:#ffe699"></div>
<div style="left:731.2px;top:149.07px;width:3.5px;height:5.59px;background:#7ccb92"></div>
<div style="left:702.8px;top:155.26px;width:27px;height:7.39px;background:#a9d08e"></div>
<div style="left:702.8px;top:162.45px;width:27px;height:7.39px;background:#ffe699"></div>
<div style="left:731.2px;top:163.45px;width:3.5px;height:5.59px;background:#7ccb92"></div>
<div style="left:702.8px;top:169.64px;width:27px;height:7.39px;background:#ffe699"></div>
<div style="left:731.2px;top:170.64px;width:3.5px;height:5.59px;background:#7ccb92"></div>
<div style="left:702.8px;top:176.83px;width:27px;height:7.39px;background:#a9d08e"></div>
<div style="left:702.8px;top:184.02px;width:27px;height:7.39px;background:#a9d08e"></div>
<div style="left:702.8px;top:207.5px;width:27px;height:7.44px;background:#a9d08e"></div>
<div style="left:731.2px;top:208.5px;width:3.5px;height:5.64px;background:#7ccb92"></div>
<div style="left:702.8px;top:214.74px;width:27px;height:7.44px;background:#a9d08e"></div>
<div style="left:702.8px;top:221.98px;width:27px;height:7.44px;background:#a9d08e"></div>
<div style="left:702.8px;top:229.22px;width:27px;height:7.44px;background:#a9d08e"></div>
<div style="left:702.8px;top:236.46px;width:27px;height:7.44px;background:#a9d08e"></div>
<div style="left:702.8px;top:243.7px;width:27px;height:7.44px;background:#a9d08e"></div>
<div style="left:702.8px;top:250.94px;width:27px;height:7.44px;background:#a9d08e"></div>
<div style="left:702.8px;top:258.18px;width:27px;height:7.44px;background:#a9d08e"></div>
<div style="left:702.8px;top:265.42px;width:27px;height:7.44px;background:#a9d08e"></div>
<div style="left:702.8px;top:272.66px;width:27px;height:7.44px;background:#a9d08e"></div>
<div style="left:702.8px;top:279.9px;width:27px;height:7.44px;background:#a9d08e"></div>
<div style="left:702.8px;top:287.14px;width:27px;height:7.44px;background:#a9d08e"></div>
<div style="left:702.8px;top:294.38px;width:27px;height:7.44px;background:#a9d08e"></div>
<div style="left:702.8px;top:301.62px;width:27px;height:7.44px;background:#a9d08e"></div>
<div style="left:702.8px;top:308.86px;width:27px;height:7.44px;background:#a9d08e"></div>
<div style="left:702.8px;top:375.86px;width:27px;height:7.56px;background:#a9d08e"></div>
<div style="left:731.2px;top:376.86px;width:3.5px;height:5.76px;background:#7ccb92"></div>
<div style="left:702.8px;top:383.22px;width:27px;height:7.56px;background:#a9d08e"></div>
<div style="left:702.8px;top:390.58px;width:27px;height:7.56px;background:#a9d08e"></div>
<div style="left:702.8px;top:397.94px;width:27px;height:7.56px;background:#a9d08e"></div>
<div style="left:702.8px;top:412.66px;width:27px;height:7.56px;background:#a9d08e"></div>
<div style="left:702.8px;top:420.02px;width:27px;height:7.56px;background:#a9d08e"></div>
<div style="left:702.8px;top:427.38px;width:27px;height:7.56px;background:#a9d08e"></div>
<div style="left:702.8px;top:434.74px;width:27px;height:7.56px;background:#a9d08e"></div>
<div style="left:702.8px;top:449.46px;width:27px;height:7.56px;background:#a9d08e"></div>
<div style="left:702.8px;top:456.82px;width:27px;height:7.56px;background:#a9d08e"></div>
<div class="t" style="left:15px;top:127.1px;width:25.5px;height:7.19px;line-height:7.19px;font-size:5.9px;font-weight:400;color:#1c1c1c;text-align:center;padding:0 0px;">1.1</div>
<div class="t" style="left:40.5px;top:127.1px;width:27.8px;height:7.19px;line-height:7.19px;font-size:5.9px;font-weight:400;color:#1c1c1c;text-align:center;padding:0 0px;">1WFT77</div>
<div class="t" style="left:69.3px;top:127.1px;width:218.2px;height:7.19px;line-height:7.19px;font-size:5.9px;font-weight:400;color:#1c1c1c;text-align:left;padding:0 0.6px;"><b style="font-size:5.3px">Start the project (SP) START</b></div>
<div class="t" style="left:730.4px;top:127.1px;width:17.6px;height:7.19px;line-height:7.19px;font-size:5.9px;font-weight:400;color:#1c1c1c;text-align:left;padding:0 1px;">N/A</div>
<div class="t" style="left:15px;top:134.29px;width:25.5px;height:7.19px;line-height:7.19px;font-size:5.9px;font-weight:400;color:#1c1c1c;text-align:center;padding:0 0px;">1.4</div>
<div class="t" style="left:40.5px;top:134.29px;width:27.8px;height:7.19px;line-height:7.19px;font-size:5.9px;font-weight:400;color:#1c1c1c;text-align:center;padding:0 0px;">1WFR7</div>
<div class="t" style="left:69.3px;top:134.29px;width:218.2px;height:7.19px;line-height:7.19px;font-size:5.9px;font-weight:400;color:#1c1c1c;text-align:left;padding:0 0.6px;">Starting the Project (SP)</div>
<div class="t" style="left:489px;top:134.29px;width:37px;height:7.19px;line-height:7.19px;font-size:5.9px;font-weight:400;color:#1c1c1c;text-align:center;padding:0 0px;">04/01/2024</div>
<div class="t" style="left:526px;top:134.29px;width:36px;height:7.19px;line-height:7.19px;font-size:5.9px;font-weight:400;color:#1c1c1c;text-align:center;padding:0 0px;">09/02/2024</div>
<div class="t" style="left:562px;top:134.29px;width:23px;height:7.19px;line-height:7.19px;font-size:5.9px;font-weight:400;color:#1c1c1c;text-align:center;padding:0 0px;">27</div>
<div class="t" style="left:585px;top:134.29px;width:36px;height:7.19px;line-height:7.19px;font-size:5.9px;font-weight:400;color:#1c1c1c;text-align:center;padding:0 0px;">04/01/2024</div>
<div class="t" style="left:621px;top:134.29px;width:35px;height:7.19px;line-height:7.19px;font-size:5.9px;font-weight:400;color:#1c1c1c;text-align:center;padding:0 0px;">09/02/2024</div>
<div class="t" style="left:656px;top:134.29px;width:21px;height:7.19px;line-height:7.19px;font-size:5.9px;font-weight:400;color:#1c1c1c;text-align:center;padding:0 0px;">27</div>
<div class="t" style="left:677px;top:134.29px;width:25px;height:7.19px;line-height:7.19px;font-size:5.9px;font-weight:400;color:#1c1c1c;text-align:center;padding:0 0px;">50</div>
<div class="t" style="left:702px;top:134.29px;width:28.4px;height:7.19px;line-height:7.19px;font-size:5.9px;font-weight:400;color:#0f3a12;text-align:center;padding:0 0px;">Green</div>
<div class="t" style="left:730.4px;top:134.29px;width:17.6px;height:7.19px;line-height:7.19px;font-size:5.9px;font-weight:400;color:#1c1c1c;text-align:right;padding:0 1px;">100%</div>
<div class="t" style="left:15px;top:141.48px;width:25.5px;height:7.19px;line-height:7.19px;font-size:5.9px;font-weight:400;color:#1c1c1c;text-align:center;padding:0 0px;">1.5</div>
<div class="t" style="left:40.5px;top:141.48px;width:27.8px;height:7.19px;line-height:7.19px;font-size:5.9px;font-weight:400;color:#1c1c1c;text-align:center;padding:0 0px;">1WFR8</div>
<div class="t" style="left:69.3px;top:141.48px;width:218.2px;height:7.19px;line-height:7.19px;font-size:5.9px;font-weight:400;color:#1c1c1c;text-align:left;padding:0 0.6px;">Directing the Project (DP)</div>
<div class="t" style="left:288.5px;top:141.48px;width:96px;height:7.19px;line-height:7.19px;font-size:5.9px;font-weight:400;color:#1c1c1c;text-align:left;padding:0 0.6px;">Robert Plant</div>
<div class="t" style="left:355.5px;top:141.48px;width:121px;height:7.19px;line-height:7.19px;font-size:5.9px;font-weight:400;color:#1c1c1c;text-align:left;padding:0 0.6px;">Communications Developer</div>
<div class="t" style="left:489px;top:141.48px;width:37px;height:7.19px;line-height:7.19px;font-size:5.9px;font-weight:400;color:#1c1c1c;text-align:center;padding:0 0px;">05/01/2024</div>
<div class="t" style="left:526px;top:141.48px;width:36px;height:7.19px;line-height:7.19px;font-size:5.9px;font-weight:400;color:#1c1c1c;text-align:center;padding:0 0px;">08/01/2024</div>
<div class="t" style="left:562px;top:141.48px;width:23px;height:7.19px;line-height:7.19px;font-size:5.9px;font-weight:400;color:#1c1c1c;text-align:center;padding:0 0px;">2</div>
<div class="t" style="left:585px;top:141.48px;width:36px;height:7.19px;line-height:7.19px;font-size:5.9px;font-weight:400;color:#1c1c1c;text-align:center;padding:0 0px;">05/01/2024</div>
<div class="t" style="left:621px;top:141.48px;width:35px;height:7.19px;line-height:7.19px;font-size:5.9px;font-weight:400;color:#1c1c1c;text-align:center;padding:0 0px;">08/01/2024</div>
<div class="t" style="left:656px;top:141.48px;width:21px;height:7.19px;line-height:7.19px;font-size:5.9px;font-weight:400;color:#1c1c1c;text-align:center;padding:0 0px;">2</div>
<div class="t" style="left:677px;top:141.48px;width:25px;height:7.19px;line-height:7.19px;font-size:5.9px;font-weight:400;color:#1c1c1c;text-align:center;padding:0 0px;">26</div>
<div class="t" style="left:702px;top:141.48px;width:28.4px;height:7.19px;line-height:7.19px;font-size:5.9px;font-weight:400;color:#0f3a12;text-align:center;padding:0 0px;">Green</div>
<div class="t" style="left:730.4px;top:141.48px;width:17.6px;height:7.19px;line-height:7.19px;font-size:5.9px;font-weight:400;color:#1c1c1c;text-align:right;padding:0 1px;">100%</div>
<div class="t" style="left:15px;top:148.67px;width:25.5px;height:7.19px;line-height:7.19px;font-size:5.9px;font-weight:400;color:#1c1c1c;text-align:center;padding:0 0px;">1.6</div>
<div class="t" style="left:40.5px;top:148.67px;width:27.8px;height:7.19px;line-height:7.19px;font-size:5.9px;font-weight:400;color:#1c1c1c;text-align:center;padding:0 0px;">1WFR9</div>
<div class="t" style="left:69.3px;top:148.67px;width:218.2px;height:7.19px;line-height:7.19px;font-size:5.9px;font-weight:400;color:#1c1c1c;text-align:left;padding:0 0.6px;">Initiate the Project (IP)</div>
<div class="t" style="left:288.5px;top:148.67px;width:96px;height:7.19px;line-height:7.19px;font-size:5.9px;font-weight:400;color:#1c1c1c;text-align:left;padding:0 0.6px;">Kenneth Leroy Roberts</div>
<div class="t" style="left:355.5px;top:148.67px;width:121px;height:7.19px;line-height:7.19px;font-size:5.9px;font-weight:400;color:#1c1c1c;text-align:left;padding:0 0.6px;">Test Manager</div>
<div class="t" style="left:489px;top:148.67px;width:37px;height:7.19px;line-height:7.19px;font-size:5.9px;font-weight:400;color:#1c1c1c;text-align:center;padding:0 0px;">06/01/2024</div>
<div class="t" style="left:526px;top:148.67px;width:36px;height:7.19px;line-height:7.19px;font-size:5.9px;font-weight:400;color:#1c1c1c;text-align:center;padding:0 0px;">08/01/2024</div>
<div class="t" style="left:562px;top:148.67px;width:23px;height:7.19px;line-height:7.19px;font-size:5.9px;font-weight:400;color:#1c1c1c;text-align:center;padding:0 0px;">1</div>
<div class="t" style="left:585px;top:148.67px;width:36px;height:7.19px;line-height:7.19px;font-size:5.9px;font-weight:400;color:#1c1c1c;text-align:center;padding:0 0px;">06/01/2024</div>
<div class="t" style="left:621px;top:148.67px;width:35px;height:7.19px;line-height:7.19px;font-size:5.9px;font-weight:400;color:#1c1c1c;text-align:center;padding:0 0px;">08/01/2024</div>
<div class="t" style="left:656px;top:148.67px;width:21px;height:7.19px;line-height:7.19px;font-size:5.9px;font-weight:400;color:#1c1c1c;text-align:center;padding:0 0px;">1</div>
<div class="t" style="left:677px;top:148.67px;width:25px;height:7.19px;line-height:7.19px;font-size:5.9px;font-weight:400;color:#1c1c1c;text-align:center;padding:0 0px;">26</div>
<div class="t" style="left:702px;top:148.67px;width:28.4px;height:7.19px;line-height:7.19px;font-size:5.9px;font-weight:400;color:#3a3010;text-align:center;padding:0 0px;">Amber</div>
<div class="t" style="left:730.4px;top:148.67px;width:17.6px;height:7.19px;line-height:7.19px;font-size:5.9px;font-weight:400;color:#1c1c1c;text-align:right;padding:0 1px;">50%</div>
<div class="t" style="left:15px;top:155.86px;width:25.5px;height:7.19px;line-height:7.19px;font-size:5.9px;font-weight:400;color:#1c1c1c;text-align:center;padding:0 0px;">1.7</div>
<div class="t" style="left:40.5px;top:155.86px;width:27.8px;height:7.19px;line-height:7.19px;font-size:5.9px;font-weight:400;color:#1c1c1c;text-align:center;padding:0 0px;">1WFR10</div>
<div class="t" style="left:69.3px;top:155.86px;width:218.2px;height:7.19px;line-height:7.19px;font-size:5.9px;font-weight:400;color:#1c1c1c;text-align:left;padding:0 0.6px;">Manage the Stage Bounderies (MS)</div>
<div class="t" style="left:355.5px;top:155.86px;width:121px;height:7.19px;line-height:7.19px;font-size:5.9px;font-weight:400;color:#1c1c1c;text-align:left;padding:0 0.6px;">Stakeholder Team</div>
<div class="t" style="left:489px;top:155.86px;width:37px;height:7.19px;line-height:7.19px;font-size:5.9px;font-weight:400;color:#1c1c1c;text-align:center;padding:0 0px;">07/01/2024</div>
<div class="t" style="left:526px;top:155.86px;width:36px;height:7.19px;line-height:7.19px;font-size:5.9px;font-weight:400;color:#1c1c1c;text-align:center;padding:0 0px;">09/01/2024</div>
<div class="t" style="left:562px;top:155.86px;width:23px;height:7.19px;line-height:7.19px;font-size:5.9px;font-weight:400;color:#1c1c1c;text-align:center;padding:0 0px;">2</div>
<div class="t" style="left:585px;top:155.86px;width:36px;height:7.19px;line-height:7.19px;font-size:5.9px;font-weight:400;color:#1c1c1c;text-align:center;padding:0 0px;">07/01/2024</div>
<div class="t" style="left:621px;top:155.86px;width:35px;height:7.19px;line-height:7.19px;font-size:5.9px;font-weight:400;color:#1c1c1c;text-align:center;padding:0 0px;">09/01/2024</div>
<div class="t" style="left:656px;top:155.86px;width:21px;height:7.19px;line-height:7.19px;font-size:5.9px;font-weight:400;color:#1c1c1c;text-align:center;padding:0 0px;">2</div>
<div class="t" style="left:677px;top:155.86px;width:25px;height:7.19px;line-height:7.19px;font-size:5.9px;font-weight:400;color:#1c1c1c;text-align:center;padding:0 0px;">27</div>
<div class="t" style="left:702px;top:155.86px;width:28.4px;height:7.19px;line-height:7.19px;font-size:5.9px;font-weight:400;color:#0f3a12;text-align:center;padding:0 0px;">Green</div>
<div class="t" style="left:730.4px;top:155.86px;width:17.6px;height:7.19px;line-height:7.19px;font-size:5.9px;font-weight:400;color:#1c1c1c;text-align:right;padding:0 1px;">0%</div>
<div class="t" style="left:15px;top:163.05px;width:25.5px;height:7.19px;line-height:7.19px;font-size:5.9px;font-weight:400;color:#1c1c1c;text-align:center;padding:0 0px;">1.8</div>
<div class="t" style="left:40.5px;top:163.05px;width:27.8px;height:7.19px;line-height:7.19px;font-size:5.9px;font-weight:400;color:#1c1c1c;text-align:center;padding:0 0px;">1WFR11</div>
<div class="t" style="left:69.3px;top:163.05px;width:218.2px;height:7.19px;line-height:7.19px;font-size:5.9px;font-weight:400;color:#1c1c1c;text-align:left;padding:0 0.6px;">Control the Stage (CS)</div>
<div class="t" style="left:288.5px;top:163.05px;width:96px;height:7.19px;line-height:7.19px;font-size:5.9px;font-weight:400;color:#1c1c1c;text-align:left;padding:0 0.6px;">Ronald Haslam</div>
<div class="t" style="left:489px;top:163.05px;width:37px;height:7.19px;line-height:7.19px;font-size:5.9px;font-weight:400;color:#1c1c1c;text-align:center;padding:0 0px;">08/01/2024</div>
<div class="t" style="left:526px;top:163.05px;width:36px;height:7.19px;line-height:7.19px;font-size:5.9px;font-weight:400;color:#1c1c1c;text-align:center;padding:0 0px;">10/01/2024</div>
<div class="t" style="left:562px;top:163.05px;width:23px;height:7.19px;line-height:7.19px;font-size:5.9px;font-weight:400;color:#1c1c1c;text-align:center;padding:0 0px;">3</div>
<div class="t" style="left:585px;top:163.05px;width:36px;height:7.19px;line-height:7.19px;font-size:5.9px;font-weight:400;color:#1c1c1c;text-align:center;padding:0 0px;">08/01/2024</div>
<div class="t" style="left:621px;top:163.05px;width:35px;height:7.19px;line-height:7.19px;font-size:5.9px;font-weight:400;color:#1c1c1c;text-align:center;padding:0 0px;">10/01/2024</div>
<div class="t" style="left:656px;top:163.05px;width:21px;height:7.19px;line-height:7.19px;font-size:5.9px;font-weight:400;color:#1c1c1c;text-align:center;padding:0 0px;">3</div>
<div class="t" style="left:677px;top:163.05px;width:25px;height:7.19px;line-height:7.19px;font-size:5.9px;font-weight:400;color:#1c1c1c;text-align:center;padding:0 0px;">28</div>
<div class="t" style="left:702px;top:163.05px;width:28.4px;height:7.19px;line-height:7.19px;font-size:5.9px;font-weight:400;color:#3a3010;text-align:center;padding:0 0px;">Amber</div>
<div class="t" style="left:730.4px;top:163.05px;width:17.6px;height:7.19px;line-height:7.19px;font-size:5.9px;font-weight:400;color:#1c1c1c;text-align:right;padding:0 1px;">20%</div>
<div class="t" style="left:15px;top:170.24px;width:25.5px;height:7.19px;line-height:7.19px;font-size:5.9px;font-weight:400;color:#1c1c1c;text-align:center;padding:0 0px;">1.9</div>
<div class="t" style="left:40.5px;top:170.24px;width:27.8px;height:7.19px;line-height:7.19px;font-size:5.9px;font-weight:400;color:#1c1c1c;text-align:center;padding:0 0px;">1WFR12</div>
<div class="t" style="left:69.3px;top:170.24px;width:218.2px;height:7.19px;line-height:7.19px;font-size:5.9px;font-weight:400;color:#1c1c1c;text-align:left;padding:0 0.6px;">Manage the Project Delivery (MP)</div>
<div class="t" style="left:288.5px;top:170.24px;width:96px;height:7.19px;line-height:7.19px;font-size:5.9px;font-weight:400;color:#1c1c1c;text-align:left;padding:0 0.6px;">Phillipa Bestannione</div>
<div class="t" style="left:355.5px;top:170.24px;width:121px;height:7.19px;line-height:7.19px;font-size:5.9px;font-weight:400;color:#1c1c1c;text-align:left;padding:0 0.6px;">Network Developer &amp; PGE</div>
<div class="t" style="left:489px;top:170.24px;width:37px;height:7.19px;line-height:7.19px;font-size:5.9px;font-weight:400;color:#1c1c1c;text-align:center;padding:0 0px;">09/01/2024</div>
<div class="t" style="left:526px;top:170.24px;width:36px;height:7.19px;line-height:7.19px;font-size:5.9px;font-weight:400;color:#1c1c1c;text-align:center;padding:0 0px;">11/01/2024</div>
<div class="t" style="left:562px;top:170.24px;width:23px;height:7.19px;line-height:7.19px;font-size:5.9px;font-weight:400;color:#1c1c1c;text-align:center;padding:0 0px;">3</div>
<div class="t" style="left:585px;top:170.24px;width:36px;height:7.19px;line-height:7.19px;font-size:5.9px;font-weight:400;color:#1c1c1c;text-align:center;padding:0 0px;">09/01/2024</div>
<div class="t" style="left:621px;top:170.24px;width:35px;height:7.19px;line-height:7.19px;font-size:5.9px;font-weight:400;color:#1c1c1c;text-align:center;padding:0 0px;">11/01/2024</div>
<div class="t" style="left:656px;top:170.24px;width:21px;height:7.19px;line-height:7.19px;font-size:5.9px;font-weight:400;color:#1c1c1c;text-align:center;padding:0 0px;">3</div>
<div class="t" style="left:677px;top:170.24px;width:25px;height:7.19px;line-height:7.19px;font-size:5.9px;font-weight:400;color:#1c1c1c;text-align:center;padding:0 0px;">29</div>
<div class="t" style="left:702px;top:170.24px;width:28.4px;height:7.19px;line-height:7.19px;font-size:5.9px;font-weight:400;color:#3a3010;text-align:center;padding:0 0px;">Amber</div>
<div class="t" style="left:730.4px;top:170.24px;width:17.6px;height:7.19px;line-height:7.19px;font-size:5.9px;font-weight:400;color:#1c1c1c;text-align:right;padding:0 1px;">30%</div>
<div class="t" style="left:15px;top:177.43px;width:25.5px;height:7.19px;line-height:7.19px;font-size:5.9px;font-weight:400;color:#1c1c1c;text-align:center;padding:0 0px;">1.10</div>
<div class="t" style="left:40.5px;top:177.43px;width:27.8px;height:7.19px;line-height:7.19px;font-size:5.9px;font-weight:400;color:#1c1c1c;text-align:center;padding:0 0px;">1WFR13</div>
<div class="t" style="left:69.3px;top:177.43px;width:218.2px;height:7.19px;line-height:7.19px;font-size:5.9px;font-weight:400;color:#1c1c1c;text-align:left;padding:0 0.6px;">Close the Project (CP)</div>
<div class="t" style="left:489px;top:177.43px;width:37px;height:7.19px;line-height:7.19px;font-size:5.9px;font-weight:400;color:#1c1c1c;text-align:center;padding:0 0px;">10/01/2024</div>
<div class="t" style="left:526px;top:177.43px;width:36px;height:7.19px;line-height:7.19px;font-size:5.9px;font-weight:400;color:#1c1c1c;text-align:center;padding:0 0px;">12/01/2024</div>
<div class="t" style="left:562px;top:177.43px;width:23px;height:7.19px;line-height:7.19px;font-size:5.9px;font-weight:400;color:#1c1c1c;text-align:center;padding:0 0px;">3</div>
<div class="t" style="left:585px;top:177.43px;width:36px;height:7.19px;line-height:7.19px;font-size:5.9px;font-weight:400;color:#1c1c1c;text-align:center;padding:0 0px;">10/01/2024</div>
<div class="t" style="left:621px;top:177.43px;width:35px;height:7.19px;line-height:7.19px;font-size:5.9px;font-weight:400;color:#1c1c1c;text-align:center;padding:0 0px;">12/01/2024</div>
<div class="t" style="left:656px;top:177.43px;width:21px;height:7.19px;line-height:7.19px;font-size:5.9px;font-weight:400;color:#1c1c1c;text-align:center;padding:0 0px;">3</div>
<div class="t" style="left:677px;top:177.43px;width:25px;height:7.19px;line-height:7.19px;font-size:5.9px;font-weight:400;color:#1c1c1c;text-align:center;padding:0 0px;">30</div>
<div class="t" style="left:702px;top:177.43px;width:28.4px;height:7.19px;line-height:7.19px;font-size:5.9px;font-weight:400;color:#0f3a12;text-align:center;padding:0 0px;">Green</div>
<div class="t" style="left:730.4px;top:177.43px;width:17.6px;height:7.19px;line-height:7.19px;font-size:5.9px;font-weight:400;color:#1c1c1c;text-align:right;padding:0 1px;">0%</div>
<div class="t" style="left:15px;top:184.62px;width:25.5px;height:7.19px;line-height:7.19px;font-size:5.9px;font-weight:400;color:#1c1c1c;text-align:center;padding:0 0px;">1.11</div>
<div class="t" style="left:40.5px;top:184.62px;width:27.8px;height:7.19px;line-height:7.19px;font-size:5.9px;font-weight:400;color:#1c1c1c;text-align:center;padding:0 0px;">1WFR14</div>
<div class="t" style="left:69.3px;top:184.62px;width:218.2px;height:7.19px;line-height:7.19px;font-size:5.9px;font-weight:400;color:#1c1c1c;text-align:left;padding:0 0.6px;">Prince2 Project Close</div>
<div class="t" style="left:288.5px;top:184.62px;width:96px;height:7.19px;line-height:7.19px;font-size:5.9px;font-weight:400;color:#1c1c1c;text-align:left;padding:0 0.6px;">David Aldana</div>
<div class="t" style="left:355.5px;top:184.62px;width:121px;height:7.19px;line-height:7.19px;font-size:5.9px;font-weight:400;color:#1c1c1c;text-align:left;padding:0 0.6px;">Scope Approval Manager</div>
<div class="t" style="left:489px;top:184.62px;width:37px;height:7.19px;line-height:7.19px;font-size:5.9px;font-weight:400;color:#1c1c1c;text-align:center;padding:0 0px;">11/01/2024</div>
<div class="t" style="left:526px;top:184.62px;width:36px;height:7.19px;line-height:7.19px;font-size:5.9px;font-weight:400;color:#1c1c1c;text-align:center;padding:0 0px;">13/01/2024</div>
<div class="t" style="left:562px;top:184.62px;width:23px;height:7.19px;line-height:7.19px;font-size:5.9px;font-weight:400;color:#1c1c1c;text-align:center;padding:0 0px;">2</div>
<div class="t" style="left:585px;top:184.62px;width:36px;height:7.19px;line-height:7.19px;font-size:5.9px;font-weight:400;color:#1c1c1c;text-align:center;padding:0 0px;">11/01/2024</div>
<div class="t" style="left:621px;top:184.62px;width:35px;height:7.19px;line-height:7.19px;font-size:5.9px;font-weight:400;color:#1c1c1c;text-align:center;padding:0 0px;">13/01/2024</div>
<div class="t" style="left:656px;top:184.62px;width:21px;height:7.19px;line-height:7.19px;font-size:5.9px;font-weight:400;color:#1c1c1c;text-align:center;padding:0 0px;">2</div>
<div class="t" style="left:677px;top:184.62px;width:25px;height:7.19px;line-height:7.19px;font-size:5.9px;font-weight:400;color:#1c1c1c;text-align:center;padding:0 0px;">30</div>
<div class="t" style="left:702px;top:184.62px;width:28.4px;height:7.19px;line-height:7.19px;font-size:5.9px;font-weight:400;color:#0f3a12;text-align:center;padding:0 0px;">Green</div>
<div class="t" style="left:730.4px;top:184.62px;width:17.6px;height:7.19px;line-height:7.19px;font-size:5.9px;font-weight:400;color:#1c1c1c;text-align:right;padding:0 1px;">0%</div>
<div class="t" style="left:15px;top:208.4px;width:25.5px;height:7.24px;line-height:7.24px;font-size:5.9px;font-weight:400;color:#1c1c1c;text-align:center;padding:0 0px;">2.1</div>
<div class="t" style="left:40.5px;top:208.4px;width:27.8px;height:7.24px;line-height:7.24px;font-size:5.9px;font-weight:400;color:#1c1c1c;text-align:center;padding:0 0px;">2RT7</div>
<div class="t" style="left:69.3px;top:208.4px;width:218.2px;height:7.24px;line-height:7.24px;font-size:5.9px;font-weight:400;color:#1c1c1c;text-align:left;padding:0 0.6px;">Milestone&nbsp; 1 <b style="font-size:5.2px;letter-spacing:-0.05px">Appoint Project Executive. (Review Subsectons 4.1)</b></div>
<div class="t" style="left:489px;top:208.4px;width:37px;height:7.24px;line-height:7.24px;font-size:5.9px;font-weight:400;color:#1c1c1c;text-align:center;padding:0 0px;">10/01/2024</div>
<div class="t" style="left:526px;top:208.4px;width:36px;height:7.24px;line-height:7.24px;font-size:5.9px;font-weight:400;color:#1c1c1c;text-align:center;padding:0 0px;">15/01/2024</div>
<div class="t" style="left:562px;top:208.4px;width:23px;height:7.24px;line-height:7.24px;font-size:5.9px;font-weight:400;color:#1c1c1c;text-align:center;padding:0 0px;">4</div>
<div class="t" style="left:585px;top:208.4px;width:36px;height:7.24px;line-height:7.24px;font-size:5.9px;font-weight:400;color:#1c1c1c;text-align:center;padding:0 0px;">10/01/2024</div>
<div class="t" style="left:621px;top:208.4px;width:35px;height:7.24px;line-height:7.24px;font-size:5.9px;font-weight:400;color:#1c1c1c;text-align:center;padding:0 0px;">15/01/2024</div>
<div class="t" style="left:656px;top:208.4px;width:21px;height:7.24px;line-height:7.24px;font-size:5.9px;font-weight:400;color:#1c1c1c;text-align:center;padding:0 0px;">4</div>
<div class="t" style="left:677px;top:208.4px;width:25px;height:7.24px;line-height:7.24px;font-size:5.9px;font-weight:400;color:#1c1c1c;text-align:center;padding:0 0px;">31</div>
<div class="t" style="left:702px;top:208.4px;width:28.4px;height:7.24px;line-height:7.24px;font-size:5.9px;font-weight:400;color:#0f3a12;text-align:center;padding:0 0px;">Green</div>
<div class="t" style="left:730.4px;top:208.4px;width:17.6px;height:7.24px;line-height:7.24px;font-size:5.9px;font-weight:400;color:#1c1c1c;text-align:right;padding:0 1px;">20%</div>
<div class="t" style="left:15px;top:215.64px;width:25.5px;height:7.24px;line-height:7.24px;font-size:5.9px;font-weight:400;color:#1c1c1c;text-align:center;padding:0 0px;">2.2</div>
<div class="t" style="left:40.5px;top:215.64px;width:27.8px;height:7.24px;line-height:7.24px;font-size:5.9px;font-weight:400;color:#1c1c1c;text-align:center;padding:0 0px;">2RT8</div>
<div class="t" style="left:69.3px;top:215.64px;width:218.2px;height:7.24px;line-height:7.24px;font-size:5.9px;font-weight:400;color:#1c1c1c;text-align:left;padding:0 0.6px;">Milestone 2 <b style="font-size:5.2px;letter-spacing:-0.05px">Appoint Project Manager</b></div>
<div class="t" style="left:489px;top:215.64px;width:37px;height:7.24px;line-height:7.24px;font-size:5.9px;font-weight:400;color:#1c1c1c;text-align:center;padding:0 0px;">15/01/2024</div>
<div class="t" style="left:526px;top:215.64px;width:36px;height:7.24px;line-height:7.24px;font-size:5.9px;font-weight:400;color:#1c1c1c;text-align:center;padding:0 0px;">16/01/2024</div>
<div class="t" style="left:562px;top:215.64px;width:23px;height:7.24px;line-height:7.24px;font-size:5.9px;font-weight:400;color:#1c1c1c;text-align:center;padding:0 0px;">2</div>
<div class="t" style="left:585px;top:215.64px;width:36px;height:7.24px;line-height:7.24px;font-size:5.9px;font-weight:400;color:#1c1c1c;text-align:center;padding:0 0px;">15/01/2024</div>
<div class="t" style="left:621px;top:215.64px;width:35px;height:7.24px;line-height:7.24px;font-size:5.9px;font-weight:400;color:#1c1c1c;text-align:center;padding:0 0px;">16/01/2024</div>
<div class="t" style="left:656px;top:215.64px;width:21px;height:7.24px;line-height:7.24px;font-size:5.9px;font-weight:400;color:#1c1c1c;text-align:center;padding:0 0px;">2</div>
<div class="t" style="left:677px;top:215.64px;width:25px;height:7.24px;line-height:7.24px;font-size:5.9px;font-weight:400;color:#1c1c1c;text-align:center;padding:0 0px;">32</div>
<div class="t" style="left:702px;top:215.64px;width:28.4px;height:7.24px;line-height:7.24px;font-size:5.9px;font-weight:400;color:#0f3a12;text-align:center;padding:0 0px;">Green</div>
<div class="t" style="left:730.4px;top:215.64px;width:17.6px;height:7.24px;line-height:7.24px;font-size:5.9px;font-weight:400;color:#1c1c1c;text-align:right;padding:0 1px;">0%</div>
<div class="t" style="left:15px;top:222.88px;width:25.5px;height:7.24px;line-height:7.24px;font-size:5.9px;font-weight:400;color:#1c1c1c;text-align:center;padding:0 0px;">2.3</div>
<div class="t" style="left:40.5px;top:222.88px;width:27.8px;height:7.24px;line-height:7.24px;font-size:5.9px;font-weight:400;color:#1c1c1c;text-align:center;padding:0 0px;">2RT9</div>
<div class="t" style="left:69.3px;top:222.88px;width:218.2px;height:7.24px;line-height:7.24px;font-size:5.9px;font-weight:400;color:#1c1c1c;text-align:left;padding:0 0.6px;">Milestone 3 <b style="font-size:5.2px;letter-spacing:-0.05px">Appoint Management Team</b></div>
<div class="t" style="left:489px;top:222.88px;width:37px;height:7.24px;line-height:7.24px;font-size:5.9px;font-weight:400;color:#1c1c1c;text-align:center;padding:0 0px;">18/02/2024</div>
<div class="t" style="left:526px;top:222.88px;width:36px;height:7.24px;line-height:7.24px;font-size:5.9px;font-weight:400;color:#1c1c1c;text-align:center;padding:0 0px;">22/02/2024</div>
<div class="t" style="left:562px;top:222.88px;width:23px;height:7.24px;line-height:7.24px;font-size:5.9px;font-weight:400;color:#1c1c1c;text-align:center;padding:0 0px;">4</div>
<div class="t" style="left:585px;top:222.88px;width:36px;height:7.24px;line-height:7.24px;font-size:5.9px;font-weight:400;color:#1c1c1c;text-align:center;padding:0 0px;">18/02/2024</div>
<div class="t" style="left:621px;top:222.88px;width:35px;height:7.24px;line-height:7.24px;font-size:5.9px;font-weight:400;color:#1c1c1c;text-align:center;padding:0 0px;">22/02/2024</div>
<div class="t" style="left:656px;top:222.88px;width:21px;height:7.24px;line-height:7.24px;font-size:5.9px;font-weight:400;color:#1c1c1c;text-align:center;padding:0 0px;">4</div>
<div class="t" style="left:677px;top:222.88px;width:25px;height:7.24px;line-height:7.24px;font-size:5.9px;font-weight:400;color:#1c1c1c;text-align:center;padding:0 0px;">59</div>
<div class="t" style="left:702px;top:222.88px;width:28.4px;height:7.24px;line-height:7.24px;font-size:5.9px;font-weight:400;color:#0f3a12;text-align:center;padding:0 0px;">Green</div>
<div class="t" style="left:730.4px;top:222.88px;width:17.6px;height:7.24px;line-height:7.24px;font-size:5.9px;font-weight:400;color:#1c1c1c;text-align:right;padding:0 1px;">0%</div>
<div class="t" style="left:15px;top:230.12px;width:25.5px;height:7.24px;line-height:7.24px;font-size:5.9px;font-weight:400;color:#1c1c1c;text-align:center;padding:0 0px;">2.4</div>
<div class="t" style="left:40.5px;top:230.12px;width:27.8px;height:7.24px;line-height:7.24px;font-size:5.9px;font-weight:400;color:#1c1c1c;text-align:center;padding:0 0px;">2RT10</div>
<div class="t" style="left:69.3px;top:230.12px;width:218.2px;height:7.24px;line-height:7.24px;font-size:5.9px;font-weight:400;color:#1c1c1c;text-align:left;padding:0 0.6px;">Milestone 4 <b style="font-size:5.2px;letter-spacing:-0.05px">Approve Project Brief Charter</b></div>
<div class="t" style="left:288.5px;top:230.12px;width:96px;height:7.24px;line-height:7.24px;font-size:5.9px;font-weight:400;color:#1c1c1c;text-align:left;padding:0 0.6px;">Kenneth Williams</div>
<div class="t" style="left:355.5px;top:230.12px;width:121px;height:7.24px;line-height:7.24px;font-size:5.9px;font-weight:400;color:#1c1c1c;text-align:left;padding:0 0.6px;">HR and 3rd Party</div>
<div class="t" style="left:447.5px;top:230.12px;width:41.5px;height:7.24px;line-height:7.24px;font-size:5.9px;font-weight:400;color:#1c1c1c;text-align:left;padding:0 0.6px;overflow:hidden">Input from stak</div>
<div class="t" style="left:489px;top:230.12px;width:37px;height:7.24px;line-height:7.24px;font-size:5.9px;font-weight:400;color:#1c1c1c;text-align:center;padding:0 0px;">23/02/2024</div>
<div class="t" style="left:526px;top:230.12px;width:36px;height:7.24px;line-height:7.24px;font-size:5.9px;font-weight:400;color:#1c1c1c;text-align:center;padding:0 0px;">26/02/2024</div>
<div class="t" style="left:562px;top:230.12px;width:23px;height:7.24px;line-height:7.24px;font-size:5.9px;font-weight:400;color:#1c1c1c;text-align:center;padding:0 0px;">2</div>
<div class="t" style="left:585px;top:230.12px;width:36px;height:7.24px;line-height:7.24px;font-size:5.9px;font-weight:400;color:#1c1c1c;text-align:center;padding:0 0px;">23/02/2024</div>
<div class="t" style="left:621px;top:230.12px;width:35px;height:7.24px;line-height:7.24px;font-size:5.9px;font-weight:400;color:#1c1c1c;text-align:center;padding:0 0px;">26/02/2024</div>
<div class="t" style="left:656px;top:230.12px;width:21px;height:7.24px;line-height:7.24px;font-size:5.9px;font-weight:400;color:#1c1c1c;text-align:center;padding:0 0px;">2</div>
<div class="t" style="left:677px;top:230.12px;width:25px;height:7.24px;line-height:7.24px;font-size:5.9px;font-weight:400;color:#1c1c1c;text-align:center;padding:0 0px;">61</div>
<div class="t" style="left:702px;top:230.12px;width:28.4px;height:7.24px;line-height:7.24px;font-size:5.9px;font-weight:400;color:#0f3a12;text-align:center;padding:0 0px;">Green</div>
<div class="t" style="left:730.4px;top:230.12px;width:17.6px;height:7.24px;line-height:7.24px;font-size:5.9px;font-weight:400;color:#1c1c1c;text-align:right;padding:0 1px;">0%</div>
<div class="t" style="left:15px;top:237.36px;width:25.5px;height:7.24px;line-height:7.24px;font-size:5.9px;font-weight:400;color:#1c1c1c;text-align:center;padding:0 0px;">2.5</div>
<div class="t" style="left:40.5px;top:237.36px;width:27.8px;height:7.24px;line-height:7.24px;font-size:5.9px;font-weight:400;color:#1c1c1c;text-align:center;padding:0 0px;">2RT11</div>
<div class="t" style="left:69.3px;top:237.36px;width:218.2px;height:7.24px;line-height:7.24px;font-size:5.9px;font-weight:400;color:#1c1c1c;text-align:left;padding:0 0.6px;">Milestone 5 <b style="font-size:5.2px;letter-spacing:-0.05px">Create Startup Initiation</b></div>
<div class="t" style="left:489px;top:237.36px;width:37px;height:7.24px;line-height:7.24px;font-size:5.9px;font-weight:400;color:#1c1c1c;text-align:center;padding:0 0px;">09/02/2024</div>
<div class="t" style="left:526px;top:237.36px;width:36px;height:7.24px;line-height:7.24px;font-size:5.9px;font-weight:400;color:#1c1c1c;text-align:center;padding:0 0px;">11/02/2024</div>
<div class="t" style="left:562px;top:237.36px;width:23px;height:7.24px;line-height:7.24px;font-size:5.9px;font-weight:400;color:#1c1c1c;text-align:center;padding:0 0px;">1</div>
<div class="t" style="left:585px;top:237.36px;width:36px;height:7.24px;line-height:7.24px;font-size:5.9px;font-weight:400;color:#1c1c1c;text-align:center;padding:0 0px;">09/02/2024</div>
<div class="t" style="left:621px;top:237.36px;width:35px;height:7.24px;line-height:7.24px;font-size:5.9px;font-weight:400;color:#1c1c1c;text-align:center;padding:0 0px;">11/02/2024</div>
<div class="t" style="left:656px;top:237.36px;width:21px;height:7.24px;line-height:7.24px;font-size:5.9px;font-weight:400;color:#1c1c1c;text-align:center;padding:0 0px;">1</div>
<div class="t" style="left:677px;top:237.36px;width:25px;height:7.24px;line-height:7.24px;font-size:5.9px;font-weight:400;color:#1c1c1c;text-align:center;padding:0 0px;">50</div>
<div class="t" style="left:702px;top:237.36px;width:28.4px;height:7.24px;line-height:7.24px;font-size:5.9px;font-weight:400;color:#0f3a12;text-align:center;padding:0 0px;">Green</div>
<div class="t" style="left:730.4px;top:237.36px;width:17.6px;height:7.24px;line-height:7.24px;font-size:5.9px;font-weight:400;color:#1c1c1c;text-align:right;padding:0 1px;">0%</div>
<div class="t" style="left:15px;top:244.6px;width:25.5px;height:7.24px;line-height:7.24px;font-size:5.9px;font-weight:400;color:#1c1c1c;text-align:center;padding:0 0px;">2.6</div>
<div class="t" style="left:40.5px;top:244.6px;width:27.8px;height:7.24px;line-height:7.24px;font-size:5.9px;font-weight:400;color:#1c1c1c;text-align:center;padding:0 0px;">2RT12</div>
<div class="t" style="left:69.3px;top:244.6px;width:218.2px;height:7.24px;line-height:7.24px;font-size:5.9px;font-weight:400;color:#1c1c1c;text-align:left;padding:0 0.6px;">Milestone 6</div>
<div class="t" style="left:489px;top:244.6px;width:37px;height:7.24px;line-height:7.24px;font-size:5.9px;font-weight:400;color:#1c1c1c;text-align:center;padding:0 0px;">10/02/2024</div>
<div class="t" style="left:526px;top:244.6px;width:36px;height:7.24px;line-height:7.24px;font-size:5.9px;font-weight:400;color:#1c1c1c;text-align:center;padding:0 0px;">12/02/2024</div>
<div class="t" style="left:562px;top:244.6px;width:23px;height:7.24px;line-height:7.24px;font-size:5.9px;font-weight:400;color:#1c1c1c;text-align:center;padding:0 0px;">1</div>
<div class="t" style="left:585px;top:244.6px;width:36px;height:7.24px;line-height:7.24px;font-size:5.9px;font-weight:400;color:#1c1c1c;text-align:center;padding:0 0px;">10/02/2024</div>
<div class="t" style="left:621px;top:244.6px;width:35px;height:7.24px;line-height:7.24px;font-size:5.9px;font-weight:400;color:#1c1c1c;text-align:center;padding:0 0px;">12/02/2024</div>
<div class="t" style="left:656px;top:244.6px;width:21px;height:7.24px;line-height:7.24px;font-size:5.9px;font-weight:400;color:#1c1c1c;text-align:center;padding:0 0px;">1</div>
<div class="t" style="left:677px;top:244.6px;width:25px;height:7.24px;line-height:7.24px;font-size:5.9px;font-weight:400;color:#1c1c1c;text-align:center;padding:0 0px;">51</div>
<div class="t" style="left:702px;top:244.6px;width:28.4px;height:7.24px;line-height:7.24px;font-size:5.9px;font-weight:400;color:#0f3a12;text-align:center;padding:0 0px;">Green</div>
<div class="t" style="left:730.4px;top:244.6px;width:17.6px;height:7.24px;line-height:7.24px;font-size:5.9px;font-weight:400;color:#1c1c1c;text-align:right;padding:0 1px;">0%</div>
<div class="t" style="left:15px;top:251.84px;width:25.5px;height:7.24px;line-height:7.24px;font-size:5.9px;font-weight:400;color:#1c1c1c;text-align:center;padding:0 0px;">2.7</div>
<div class="t" style="left:40.5px;top:251.84px;width:27.8px;height:7.24px;line-height:7.24px;font-size:5.9px;font-weight:400;color:#1c1c1c;text-align:center;padding:0 0px;">2RT13</div>
<div class="t" style="left:69.3px;top:251.84px;width:218.2px;height:7.24px;line-height:7.24px;font-size:5.9px;font-weight:400;color:#1c1c1c;text-align:left;padding:0 0.6px;">Milestone 7</div>
<div class="t" style="left:489px;top:251.84px;width:37px;height:7.24px;line-height:7.24px;font-size:5.9px;font-weight:400;color:#1c1c1c;text-align:center;padding:0 0px;">11/02/2024</div>
<div class="t" style="left:526px;top:251.84px;width:36px;height:7.24px;line-height:7.24px;font-size:5.9px;font-weight:400;color:#1c1c1c;text-align:center;padding:0 0px;">13/02/2024</div>
<div class="t" style="left:562px;top:251.84px;width:23px;height:7.24px;line-height:7.24px;font-size:5.9px;font-weight:400;color:#1c1c1c;text-align:center;padding:0 0px;">2</div>
<div class="t" style="left:585px;top:251.84px;width:36px;height:7.24px;line-height:7.24px;font-size:5.9px;font-weight:400;color:#1c1c1c;text-align:center;padding:0 0px;">11/02/2024</div>
<div class="t" style="left:621px;top:251.84px;width:35px;height:7.24px;line-height:7.24px;font-size:5.9px;font-weight:400;color:#1c1c1c;text-align:center;padding:0 0px;">13/02/2024</div>
<div class="t" style="left:656px;top:251.84px;width:21px;height:7.24px;line-height:7.24px;font-size:5.9px;font-weight:400;color:#1c1c1c;text-align:center;padding:0 0px;">2</div>
<div class="t" style="left:677px;top:251.84px;width:25px;height:7.24px;line-height:7.24px;font-size:5.9px;font-weight:400;color:#1c1c1c;text-align:center;padding:0 0px;">52</div>
<div class="t" style="left:702px;top:251.84px;width:28.4px;height:7.24px;line-height:7.24px;font-size:5.9px;font-weight:400;color:#0f3a12;text-align:center;padding:0 0px;">Green</div>
<div class="t" style="left:730.4px;top:251.84px;width:17.6px;height:7.24px;line-height:7.24px;font-size:5.9px;font-weight:400;color:#1c1c1c;text-align:right;padding:0 1px;">0%</div>
<div class="t" style="left:15px;top:259.08px;width:25.5px;height:7.24px;line-height:7.24px;font-size:5.9px;font-weight:400;color:#1c1c1c;text-align:center;padding:0 0px;">2.8</div>
<div class="t" style="left:40.5px;top:259.08px;width:27.8px;height:7.24px;line-height:7.24px;font-size:5.9px;font-weight:400;color:#1c1c1c;text-align:center;padding:0 0px;">2RT14</div>
<div class="t" style="left:69.3px;top:259.08px;width:218.2px;height:7.24px;line-height:7.24px;font-size:5.9px;font-weight:400;color:#1c1c1c;text-align:left;padding:0 0.6px;">Milestone 8</div>
<div class="t" style="left:489px;top:259.08px;width:37px;height:7.24px;line-height:7.24px;font-size:5.9px;font-weight:400;color:#1c1c1c;text-align:center;padding:0 0px;">12/02/2024</div>
<div class="t" style="left:526px;top:259.08px;width:36px;height:7.24px;line-height:7.24px;font-size:5.9px;font-weight:400;color:#1c1c1c;text-align:center;padding:0 0px;">14/02/2024</div>
<div class="t" style="left:562px;top:259.08px;width:23px;height:7.24px;line-height:7.24px;font-size:5.9px;font-weight:400;color:#1c1c1c;text-align:center;padding:0 0px;">3</div>
<div class="t" style="left:585px;top:259.08px;width:36px;height:7.24px;line-height:7.24px;font-size:5.9px;font-weight:400;color:#1c1c1c;text-align:center;padding:0 0px;">12/02/2024</div>
<div class="t" style="left:621px;top:259.08px;width:35px;height:7.24px;line-height:7.24px;font-size:5.9px;font-weight:400;color:#1c1c1c;text-align:center;padding:0 0px;">14/02/2024</div>
<div class="t" style="left:656px;top:259.08px;width:21px;height:7.24px;line-height:7.24px;font-size:5.9px;font-weight:400;color:#1c1c1c;text-align:center;padding:0 0px;">3</div>
<div class="t" style="left:677px;top:259.08px;width:25px;height:7.24px;line-height:7.24px;font-size:5.9px;font-weight:400;color:#1c1c1c;text-align:center;padding:0 0px;">53</div>
<div class="t" style="left:702px;top:259.08px;width:28.4px;height:7.24px;line-height:7.24px;font-size:5.9px;font-weight:400;color:#0f3a12;text-align:center;padding:0 0px;">Green</div>
<div class="t" style="left:730.4px;top:259.08px;width:17.6px;height:7.24px;line-height:7.24px;font-size:5.9px;font-weight:400;color:#1c1c1c;text-align:right;padding:0 1px;">0%</div>
<div class="t" style="left:15px;top:266.32px;width:25.5px;height:7.24px;line-height:7.24px;font-size:5.9px;font-weight:400;color:#1c1c1c;text-align:center;padding:0 0px;">2.8</div>
<div class="t" style="left:40.5px;top:266.32px;width:27.8px;height:7.24px;line-height:7.24px;font-size:5.9px;font-weight:400;color:#1c1c1c;text-align:center;padding:0 0px;">2RT14</div>
<div class="t" style="left:69.3px;top:266.32px;width:218.2px;height:7.24px;line-height:7.24px;font-size:5.9px;font-weight:400;color:#1c1c1c;text-align:left;padding:0 0.6px;">Milestone 9</div>
<div class="t" style="left:489px;top:266.32px;width:37px;height:7.24px;line-height:7.24px;font-size:5.9px;font-weight:400;color:#1c1c1c;text-align:center;padding:0 0px;">14/02/2024</div>
<div class="t" style="left:526px;top:266.32px;width:36px;height:7.24px;line-height:7.24px;font-size:5.9px;font-weight:400;color:#1c1c1c;text-align:center;padding:0 0px;">16/02/2024</div>
<div class="t" style="left:562px;top:266.32px;width:23px;height:7.24px;line-height:7.24px;font-size:5.9px;font-weight:400;color:#1c1c1c;text-align:center;padding:0 0px;">3</div>
<div class="t" style="left:585px;top:266.32px;width:36px;height:7.24px;line-height:7.24px;font-size:5.9px;font-weight:400;color:#1c1c1c;text-align:center;padding:0 0px;">14/02/2024</div>
<div class="t" style="left:621px;top:266.32px;width:35px;height:7.24px;line-height:7.24px;font-size:5.9px;font-weight:400;color:#1c1c1c;text-align:center;padding:0 0px;">16/02/2024</div>
<div class="t" style="left:656px;top:266.32px;width:21px;height:7.24px;line-height:7.24px;font-size:5.9px;font-weight:400;color:#1c1c1c;text-align:center;padding:0 0px;">3</div>
<div class="t" style="left:677px;top:266.32px;width:25px;height:7.24px;line-height:7.24px;font-size:5.9px;font-weight:400;color:#1c1c1c;text-align:center;padding:0 0px;">55</div>
<div class="t" style="left:702px;top:266.32px;width:28.4px;height:7.24px;line-height:7.24px;font-size:5.9px;font-weight:400;color:#0f3a12;text-align:center;padding:0 0px;">Green</div>
<div class="t" style="left:730.4px;top:266.32px;width:17.6px;height:7.24px;line-height:7.24px;font-size:5.9px;font-weight:400;color:#1c1c1c;text-align:right;padding:0 1px;">0%</div>
<div class="t" style="left:15px;top:273.56px;width:25.5px;height:7.24px;line-height:7.24px;font-size:5.9px;font-weight:400;color:#1c1c1c;text-align:center;padding:0 0px;">2.8</div>
<div class="t" style="left:40.5px;top:273.56px;width:27.8px;height:7.24px;line-height:7.24px;font-size:5.9px;font-weight:400;color:#1c1c1c;text-align:center;padding:0 0px;">2RT14</div>
<div class="t" style="left:69.3px;top:273.56px;width:218.2px;height:7.24px;line-height:7.24px;font-size:5.9px;font-weight:400;color:#1c1c1c;text-align:left;padding:0 0.6px;">Milestone 10</div>
<div class="t" style="left:489px;top:273.56px;width:37px;height:7.24px;line-height:7.24px;font-size:5.9px;font-weight:400;color:#1c1c1c;text-align:center;padding:0 0px;">14/02/2024</div>
<div class="t" style="left:526px;top:273.56px;width:36px;height:7.24px;line-height:7.24px;font-size:5.9px;font-weight:400;color:#1c1c1c;text-align:center;padding:0 0px;">16/02/2024</div>
<div class="t" style="left:562px;top:273.56px;width:23px;height:7.24px;line-height:7.24px;font-size:5.9px;font-weight:400;color:#1c1c1c;text-align:center;padding:0 0px;">3</div>
<div class="t" style="left:585px;top:273.56px;width:36px;height:7.24px;line-height:7.24px;font-size:5.9px;font-weight:400;color:#1c1c1c;text-align:center;padding:0 0px;">14/02/2024</div>
<div class="t" style="left:621px;top:273.56px;width:35px;height:7.24px;line-height:7.24px;font-size:5.9px;font-weight:400;color:#1c1c1c;text-align:center;padding:0 0px;">16/02/2024</div>
<div class="t" style="left:656px;top:273.56px;width:21px;height:7.24px;line-height:7.24px;font-size:5.9px;font-weight:400;color:#1c1c1c;text-align:center;padding:0 0px;">3</div>
<div class="t" style="left:677px;top:273.56px;width:25px;height:7.24px;line-height:7.24px;font-size:5.9px;font-weight:400;color:#1c1c1c;text-align:center;padding:0 0px;">55</div>
<div class="t" style="left:702px;top:273.56px;width:28.4px;height:7.24px;line-height:7.24px;font-size:5.9px;font-weight:400;color:#0f3a12;text-align:center;padding:0 0px;">Green</div>
<div class="t" style="left:730.4px;top:273.56px;width:17.6px;height:7.24px;line-height:7.24px;font-size:5.9px;font-weight:400;color:#1c1c1c;text-align:right;padding:0 1px;">0%</div>
<div class="t" style="left:15px;top:280.8px;width:25.5px;height:7.24px;line-height:7.24px;font-size:5.9px;font-weight:400;color:#1c1c1c;text-align:center;padding:0 0px;">2.6</div>
<div class="t" style="left:40.5px;top:280.8px;width:27.8px;height:7.24px;line-height:7.24px;font-size:5.9px;font-weight:400;color:#1c1c1c;text-align:center;padding:0 0px;">2RT12</div>
<div class="t" style="left:69.3px;top:280.8px;width:218.2px;height:7.24px;line-height:7.24px;font-size:5.9px;font-weight:400;color:#1c1c1c;text-align:left;padding:0 0.6px;">Milestone 11</div>
<div class="t" style="left:489px;top:280.8px;width:37px;height:7.24px;line-height:7.24px;font-size:5.9px;font-weight:400;color:#1c1c1c;text-align:center;padding:0 0px;">13/02/2024</div>
<div class="t" style="left:526px;top:280.8px;width:36px;height:7.24px;line-height:7.24px;font-size:5.9px;font-weight:400;color:#1c1c1c;text-align:center;padding:0 0px;">13/02/2024</div>
<div class="t" style="left:562px;top:280.8px;width:23px;height:7.24px;line-height:7.24px;font-size:5.9px;font-weight:400;color:#1c1c1c;text-align:center;padding:0 0px;">1</div>
<div class="t" style="left:585px;top:280.8px;width:36px;height:7.24px;line-height:7.24px;font-size:5.9px;font-weight:400;color:#1c1c1c;text-align:center;padding:0 0px;">13/02/2024</div>
<div class="t" style="left:621px;top:280.8px;width:35px;height:7.24px;line-height:7.24px;font-size:5.9px;font-weight:400;color:#1c1c1c;text-align:center;padding:0 0px;">13/02/2024</div>
<div class="t" style="left:656px;top:280.8px;width:21px;height:7.24px;line-height:7.24px;font-size:5.9px;font-weight:400;color:#1c1c1c;text-align:center;padding:0 0px;">1</div>
<div class="t" style="left:677px;top:280.8px;width:25px;height:7.24px;line-height:7.24px;font-size:5.9px;font-weight:400;color:#1c1c1c;text-align:center;padding:0 0px;">52</div>
<div class="t" style="left:702px;top:280.8px;width:28.4px;height:7.24px;line-height:7.24px;font-size:5.9px;font-weight:400;color:#0f3a12;text-align:center;padding:0 0px;">Green</div>
<div class="t" style="left:730.4px;top:280.8px;width:17.6px;height:7.24px;line-height:7.24px;font-size:5.9px;font-weight:400;color:#1c1c1c;text-align:right;padding:0 1px;">0%</div>
<div class="t" style="left:15px;top:288.04px;width:25.5px;height:7.24px;line-height:7.24px;font-size:5.9px;font-weight:400;color:#1c1c1c;text-align:center;padding:0 0px;">2.9</div>
<div class="t" style="left:40.5px;top:288.04px;width:27.8px;height:7.24px;line-height:7.24px;font-size:5.9px;font-weight:400;color:#1c1c1c;text-align:center;padding:0 0px;">2RT15</div>
<div class="t" style="left:69.3px;top:288.04px;width:218.2px;height:7.24px;line-height:7.24px;font-size:5.9px;font-weight:400;color:#1c1c1c;text-align:left;padding:0 0.6px;">Milestone 12</div>
<div class="t" style="left:288.5px;top:288.04px;width:96px;height:7.24px;line-height:7.24px;font-size:5.9px;font-weight:400;color:#1c1c1c;text-align:left;padding:0 0.6px;">Steppennatta Wenden</div>
<div class="t" style="left:355.5px;top:288.04px;width:121px;height:7.24px;line-height:7.24px;font-size:5.9px;font-weight:400;color:#1c1c1c;text-align:left;padding:0 0.6px;">Admin</div>
<div class="t" style="left:489px;top:288.04px;width:37px;height:7.24px;line-height:7.24px;font-size:5.9px;font-weight:400;color:#1c1c1c;text-align:center;padding:0 0px;">13/02/2024</div>
<div class="t" style="left:526px;top:288.04px;width:36px;height:7.24px;line-height:7.24px;font-size:5.9px;font-weight:400;color:#1c1c1c;text-align:center;padding:0 0px;">15/02/2024</div>
<div class="t" style="left:562px;top:288.04px;width:23px;height:7.24px;line-height:7.24px;font-size:5.9px;font-weight:400;color:#1c1c1c;text-align:center;padding:0 0px;">3</div>
<div class="t" style="left:585px;top:288.04px;width:36px;height:7.24px;line-height:7.24px;font-size:5.9px;font-weight:400;color:#1c1c1c;text-align:center;padding:0 0px;">13/02/2024</div>
<div class="t" style="left:621px;top:288.04px;width:35px;height:7.24px;line-height:7.24px;font-size:5.9px;font-weight:400;color:#1c1c1c;text-align:center;padding:0 0px;">15/02/2024</div>
<div class="t" style="left:656px;top:288.04px;width:21px;height:7.24px;line-height:7.24px;font-size:5.9px;font-weight:400;color:#1c1c1c;text-align:center;padding:0 0px;">3</div>
<div class="t" style="left:677px;top:288.04px;width:25px;height:7.24px;line-height:7.24px;font-size:5.9px;font-weight:400;color:#1c1c1c;text-align:center;padding:0 0px;">54</div>
<div class="t" style="left:702px;top:288.04px;width:28.4px;height:7.24px;line-height:7.24px;font-size:5.9px;font-weight:400;color:#0f3a12;text-align:center;padding:0 0px;">Green</div>
<div class="t" style="left:730.4px;top:288.04px;width:17.6px;height:7.24px;line-height:7.24px;font-size:5.9px;font-weight:400;color:#1c1c1c;text-align:right;padding:0 1px;">0%</div>
<div class="t" style="left:15px;top:295.28px;width:25.5px;height:7.24px;line-height:7.24px;font-size:5.9px;font-weight:400;color:#1c1c1c;text-align:center;padding:0 0px;">2.8</div>
<div class="t" style="left:40.5px;top:295.28px;width:27.8px;height:7.24px;line-height:7.24px;font-size:5.9px;font-weight:400;color:#1c1c1c;text-align:center;padding:0 0px;">2RT14</div>
<div class="t" style="left:69.3px;top:295.28px;width:218.2px;height:7.24px;line-height:7.24px;font-size:5.9px;font-weight:400;color:#1c1c1c;text-align:left;padding:0 0.6px;">Milestone 13</div>
<div class="t" style="left:489px;top:295.28px;width:37px;height:7.24px;line-height:7.24px;font-size:5.9px;font-weight:400;color:#1c1c1c;text-align:center;padding:0 0px;">14/02/2024</div>
<div class="t" style="left:526px;top:295.28px;width:36px;height:7.24px;line-height:7.24px;font-size:5.9px;font-weight:400;color:#1c1c1c;text-align:center;padding:0 0px;">16/02/2024</div>
<div class="t" style="left:562px;top:295.28px;width:23px;height:7.24px;line-height:7.24px;font-size:5.9px;font-weight:400;color:#1c1c1c;text-align:center;padding:0 0px;">3</div>
<div class="t" style="left:585px;top:295.28px;width:36px;height:7.24px;line-height:7.24px;font-size:5.9px;font-weight:400;color:#1c1c1c;text-align:center;padding:0 0px;">14/02/2024</div>
<div class="t" style="left:621px;top:295.28px;width:35px;height:7.24px;line-height:7.24px;font-size:5.9px;font-weight:400;color:#1c1c1c;text-align:center;padding:0 0px;">16/02/2024</div>
<div class="t" style="left:656px;top:295.28px;width:21px;height:7.24px;line-height:7.24px;font-size:5.9px;font-weight:400;color:#1c1c1c;text-align:center;padding:0 0px;">3</div>
<div class="t" style="left:677px;top:295.28px;width:25px;height:7.24px;line-height:7.24px;font-size:5.9px;font-weight:400;color:#1c1c1c;text-align:center;padding:0 0px;">55</div>
<div class="t" style="left:702px;top:295.28px;width:28.4px;height:7.24px;line-height:7.24px;font-size:5.9px;font-weight:400;color:#0f3a12;text-align:center;padding:0 0px;">Green</div>
<div class="t" style="left:730.4px;top:295.28px;width:17.6px;height:7.24px;line-height:7.24px;font-size:5.9px;font-weight:400;color:#1c1c1c;text-align:right;padding:0 1px;">0%</div>
<div class="t" style="left:15px;top:302.52px;width:25.5px;height:7.24px;line-height:7.24px;font-size:5.9px;font-weight:400;color:#1c1c1c;text-align:center;padding:0 0px;">2.8</div>
<div class="t" style="left:40.5px;top:302.52px;width:27.8px;height:7.24px;line-height:7.24px;font-size:5.9px;font-weight:400;color:#1c1c1c;text-align:center;padding:0 0px;">2RT14</div>
<div class="t" style="left:69.3px;top:302.52px;width:218.2px;height:7.24px;line-height:7.24px;font-size:5.9px;font-weight:400;color:#1c1c1c;text-align:left;padding:0 0.6px;">Milestone 14</div>
<div class="t" style="left:489px;top:302.52px;width:37px;height:7.24px;line-height:7.24px;font-size:5.9px;font-weight:400;color:#1c1c1c;text-align:center;padding:0 0px;">15/02/2024</div>
<div class="t" style="left:526px;top:302.52px;width:36px;height:7.24px;line-height:7.24px;font-size:5.9px;font-weight:400;color:#1c1c1c;text-align:center;padding:0 0px;">17/02/2024</div>
<div class="t" style="left:562px;top:302.52px;width:23px;height:7.24px;line-height:7.24px;font-size:5.9px;font-weight:400;color:#1c1c1c;text-align:center;padding:0 0px;">2</div>
<div class="t" style="left:585px;top:302.52px;width:36px;height:7.24px;line-height:7.24px;font-size:5.9px;font-weight:400;color:#1c1c1c;text-align:center;padding:0 0px;">15/02/2024</div>
<div class="t" style="left:621px;top:302.52px;width:35px;height:7.24px;line-height:7.24px;font-size:5.9px;font-weight:400;color:#1c1c1c;text-align:center;padding:0 0px;">17/02/2024</div>
<div class="t" style="left:656px;top:302.52px;width:21px;height:7.24px;line-height:7.24px;font-size:5.9px;font-weight:400;color:#1c1c1c;text-align:center;padding:0 0px;">2</div>
<div class="t" style="left:677px;top:302.52px;width:25px;height:7.24px;line-height:7.24px;font-size:5.9px;font-weight:400;color:#1c1c1c;text-align:center;padding:0 0px;">55</div>
<div class="t" style="left:702px;top:302.52px;width:28.4px;height:7.24px;line-height:7.24px;font-size:5.9px;font-weight:400;color:#0f3a12;text-align:center;padding:0 0px;">Green</div>
<div class="t" style="left:730.4px;top:302.52px;width:17.6px;height:7.24px;line-height:7.24px;font-size:5.9px;font-weight:400;color:#1c1c1c;text-align:right;padding:0 1px;">0%</div>
<div class="t" style="left:15px;top:309.76px;width:25.5px;height:7.24px;line-height:7.24px;font-size:5.9px;font-weight:400;color:#1c1c1c;text-align:center;padding:0 0px;">2.8</div>
<div class="t" style="left:40.5px;top:309.76px;width:27.8px;height:7.24px;line-height:7.24px;font-size:5.9px;font-weight:400;color:#1c1c1c;text-align:center;padding:0 0px;">2RT14</div>
<div class="t" style="left:69.3px;top:309.76px;width:218.2px;height:7.24px;line-height:7.24px;font-size:5.9px;font-weight:400;color:#1c1c1c;text-align:left;padding:0 0.6px;"><b style="font-size:5.3px;color:#7a3fb5">Insight : Stage Boundary Approaching</b></div>
<div class="t" style="left:489px;top:309.76px;width:37px;height:7.24px;line-height:7.24px;font-size:5.9px;font-weight:400;color:#1c1c1c;text-align:center;padding:0 0px;">16/02/2024</div>
<div class="t" style="left:526px;top:309.76px;width:36px;height:7.24px;line-height:7.24px;font-size:5.9px;font-weight:400;color:#1c1c1c;text-align:center;padding:0 0px;">18/02/2024</div>
<div class="t" style="left:562px;top:309.76px;width:23px;height:7.24px;line-height:7.24px;font-size:5.9px;font-weight:400;color:#1c1c1c;text-align:center;padding:0 0px;">1</div>
<div class="t" style="left:585px;top:309.76px;width:36px;height:7.24px;line-height:7.24px;font-size:5.9px;font-weight:400;color:#1c1c1c;text-align:center;padding:0 0px;">16/02/2024</div>
<div class="t" style="left:621px;top:309.76px;width:35px;height:7.24px;line-height:7.24px;font-size:5.9px;font-weight:400;color:#1c1c1c;text-align:center;padding:0 0px;">18/02/2024</div>
<div class="t" style="left:656px;top:309.76px;width:21px;height:7.24px;line-height:7.24px;font-size:5.9px;font-weight:400;color:#1c1c1c;text-align:center;padding:0 0px;">1</div>
<div class="t" style="left:677px;top:309.76px;width:25px;height:7.24px;line-height:7.24px;font-size:5.9px;font-weight:400;color:#1c1c1c;text-align:center;padding:0 0px;">55</div>
<div class="t" style="left:702px;top:309.76px;width:28.4px;height:7.24px;line-height:7.24px;font-size:5.9px;font-weight:400;color:#0f3a12;text-align:center;padding:0 0px;">Green</div>
<div class="t" style="left:730.4px;top:309.76px;width:17.6px;height:7.24px;line-height:7.24px;font-size:5.9px;font-weight:400;color:#1c1c1c;text-align:right;padding:0 1px;">0%</div>
<div class="t" style="left:15px;top:317px;width:25.5px;height:7.24px;line-height:7.24px;font-size:5.9px;font-weight:400;color:#1c1c1c;text-align:center;padding:0 0px;">2.9.1</div>
<div class="t" style="left:40.5px;top:317px;width:27.8px;height:7.24px;line-height:7.24px;font-size:5.9px;font-weight:400;color:#1c1c1c;text-align:center;padding:0 0px;">2RT16</div>
<div class="t" style="left:69.3px;top:317px;width:218.2px;height:7.24px;line-height:7.24px;font-size:5.9px;font-weight:400;color:#1c1c1c;text-align:left;padding:0 0.6px;"><b style="font-size:5.3px">Execution Phase (EP) END</b></div>
<div class="t" style="left:702px;top:317px;width:28.4px;height:7.24px;line-height:7.24px;font-size:5.9px;font-weight:400;color:#1c1c1c;text-align:center;padding:0 0px;">N/A</div>
<div class="t" style="left:730.4px;top:317px;width:17.6px;height:7.24px;line-height:7.24px;font-size:5.9px;font-weight:400;color:#1c1c1c;text-align:left;padding:0 1px;">N/A</div>
<div class="t" style="left:15px;top:369.4px;width:25.5px;height:7.36px;line-height:7.36px;font-size:5.9px;font-weight:400;color:#1c1c1c;text-align:center;padding:0 0px;">4</div>
<div class="t" style="left:40.5px;top:369.4px;width:27.8px;height:7.36px;line-height:7.36px;font-size:5.9px;font-weight:400;color:#1c1c1c;text-align:center;padding:0 0px;">4TTF6</div>
<div class="t" style="left:69.3px;top:369.4px;width:218.2px;height:7.36px;line-height:7.36px;font-size:5.9px;font-weight:400;color:#1c1c1c;text-align:left;padding:0 0.6px;">Starting the Project (SP) Start</div>
<div class="t" style="left:702px;top:369.4px;width:28.4px;height:7.36px;line-height:7.36px;font-size:5.9px;font-weight:400;color:#1c1c1c;text-align:center;padding:0 0px;">N/A</div>
<div class="t" style="left:730.4px;top:369.4px;width:17.6px;height:7.36px;line-height:7.36px;font-size:5.9px;font-weight:400;color:#1c1c1c;text-align:left;padding:0 1px;">N/A</div>
<div class="t" style="left:15px;top:376.76px;width:25.5px;height:7.36px;line-height:7.36px;font-size:5.9px;font-weight:400;color:#1c1c1c;text-align:center;padding:0 0px;">4.1</div>
<div class="t" style="left:40.5px;top:376.76px;width:27.8px;height:7.36px;line-height:7.36px;font-size:5.9px;font-weight:400;color:#1c1c1c;text-align:center;padding:0 0px;">4TTF8</div>
<div class="t" style="left:69.3px;top:376.76px;width:218.2px;height:7.36px;line-height:7.36px;font-size:5.9px;font-weight:400;color:#1c1c1c;text-align:left;padding:0 0.6px;"><b style="font-size:5.6px;color:#bf9000">Appoint Project Executive</b></div>
<div class="t" style="left:489px;top:376.76px;width:37px;height:7.36px;line-height:7.36px;font-size:5.9px;font-weight:400;color:#1c1c1c;text-align:center;padding:0 0px;">04/01/2024</div>
<div class="t" style="left:526px;top:376.76px;width:36px;height:7.36px;line-height:7.36px;font-size:5.9px;font-weight:400;color:#1c1c1c;text-align:center;padding:0 0px;">24/01/2024</div>
<div class="t" style="left:562px;top:376.76px;width:23px;height:7.36px;line-height:7.36px;font-size:5.9px;font-weight:400;color:#1c1c1c;text-align:center;padding:0 0px;">15</div>
<div class="t" style="left:585px;top:376.76px;width:36px;height:7.36px;line-height:7.36px;font-size:5.9px;font-weight:400;color:#1c1c1c;text-align:center;padding:0 0px;">04/01/2024</div>
<div class="t" style="left:621px;top:376.76px;width:35px;height:7.36px;line-height:7.36px;font-size:5.9px;font-weight:400;color:#1c1c1c;text-align:center;padding:0 0px;">24/01/2024</div>
<div class="t" style="left:656px;top:376.76px;width:21px;height:7.36px;line-height:7.36px;font-size:5.9px;font-weight:400;color:#1c1c1c;text-align:center;padding:0 0px;">15</div>
<div class="t" style="left:677px;top:376.76px;width:25px;height:7.36px;line-height:7.36px;font-size:5.9px;font-weight:400;color:#1c1c1c;text-align:center;padding:0 0px;">29</div>
<div class="t" style="left:702px;top:376.76px;width:28.4px;height:7.36px;line-height:7.36px;font-size:5.9px;font-weight:400;color:#0f3a12;text-align:center;padding:0 0px;">green</div>
<div class="t" style="left:730.4px;top:376.76px;width:17.6px;height:7.36px;line-height:7.36px;font-size:5.9px;font-weight:400;color:#1c1c1c;text-align:right;padding:0 1px;">20%</div>
<div class="t" style="left:15px;top:384.12px;width:25.5px;height:7.36px;line-height:7.36px;font-size:5.9px;font-weight:400;color:#1c1c1c;text-align:center;padding:0 0px;">4.1</div>
<div class="t" style="left:40.5px;top:384.12px;width:27.8px;height:7.36px;line-height:7.36px;font-size:5.9px;font-weight:400;color:#1c1c1c;text-align:center;padding:0 0px;">4TTF9</div>
<div class="t" style="left:69.3px;top:384.12px;width:218.2px;height:7.36px;line-height:7.36px;font-size:5.9px;font-weight:400;color:#1c1c1c;text-align:left;padding:0 0.6px;">&nbsp;&nbsp;&nbsp;&nbsp; Define Policy Instructions</div>
<div class="t" style="left:489px;top:384.12px;width:37px;height:7.36px;line-height:7.36px;font-size:5.9px;font-weight:400;color:#1c1c1c;text-align:center;padding:0 0px;">05/01/2024</div>
<div class="t" style="left:526px;top:384.12px;width:36px;height:7.36px;line-height:7.36px;font-size:5.9px;font-weight:400;color:#1c1c1c;text-align:center;padding:0 0px;">10/01/2024</div>
<div class="t" style="left:562px;top:384.12px;width:23px;height:7.36px;line-height:7.36px;font-size:5.9px;font-weight:400;color:#1c1c1c;text-align:center;padding:0 0px;">4</div>
<div class="t" style="left:585px;top:384.12px;width:36px;height:7.36px;line-height:7.36px;font-size:5.9px;font-weight:400;color:#1c1c1c;text-align:center;padding:0 0px;">05/01/2024</div>
<div class="t" style="left:621px;top:384.12px;width:35px;height:7.36px;line-height:7.36px;font-size:5.9px;font-weight:400;color:#1c1c1c;text-align:center;padding:0 0px;">10/01/2024</div>
<div class="t" style="left:656px;top:384.12px;width:21px;height:7.36px;line-height:7.36px;font-size:5.9px;font-weight:400;color:#1c1c1c;text-align:center;padding:0 0px;">4</div>
<div class="t" style="left:677px;top:384.12px;width:25px;height:7.36px;line-height:7.36px;font-size:5.9px;font-weight:400;color:#1c1c1c;text-align:center;padding:0 0px;">29</div>
<div class="t" style="left:702px;top:384.12px;width:28.4px;height:7.36px;line-height:7.36px;font-size:5.9px;font-weight:400;color:#0f3a12;text-align:center;padding:0 0px;">green</div>
<div class="t" style="left:730.4px;top:384.12px;width:17.6px;height:7.36px;line-height:7.36px;font-size:5.9px;font-weight:400;color:#1c1c1c;text-align:right;padding:0 1px;">0%</div>
<div class="t" style="left:15px;top:391.48px;width:25.5px;height:7.36px;line-height:7.36px;font-size:5.9px;font-weight:400;color:#1c1c1c;text-align:center;padding:0 0px;">4.1</div>
<div class="t" style="left:40.5px;top:391.48px;width:27.8px;height:7.36px;line-height:7.36px;font-size:5.9px;font-weight:400;color:#1c1c1c;text-align:center;padding:0 0px;">4TTF10</div>
<div class="t" style="left:69.3px;top:391.48px;width:218.2px;height:7.36px;line-height:7.36px;font-size:5.9px;font-weight:400;color:#1c1c1c;text-align:left;padding:0 0.6px;">&nbsp;&nbsp;&nbsp;&nbsp; Create Guidelines Notes</div>
<div class="t" style="left:489px;top:391.48px;width:37px;height:7.36px;line-height:7.36px;font-size:5.9px;font-weight:400;color:#1c1c1c;text-align:center;padding:0 0px;">06/01/2024</div>
<div class="t" style="left:526px;top:391.48px;width:36px;height:7.36px;line-height:7.36px;font-size:5.9px;font-weight:400;color:#1c1c1c;text-align:center;padding:0 0px;">16/01/2024</div>
<div class="t" style="left:562px;top:391.48px;width:23px;height:7.36px;line-height:7.36px;font-size:5.9px;font-weight:400;color:#1c1c1c;text-align:center;padding:0 0px;">7</div>
<div class="t" style="left:585px;top:391.48px;width:36px;height:7.36px;line-height:7.36px;font-size:5.9px;font-weight:400;color:#1c1c1c;text-align:center;padding:0 0px;">06/01/2024</div>
<div class="t" style="left:621px;top:391.48px;width:35px;height:7.36px;line-height:7.36px;font-size:5.9px;font-weight:400;color:#1c1c1c;text-align:center;padding:0 0px;">16/01/2024</div>
<div class="t" style="left:656px;top:391.48px;width:21px;height:7.36px;line-height:7.36px;font-size:5.9px;font-weight:400;color:#1c1c1c;text-align:center;padding:0 0px;">7</div>
<div class="t" style="left:677px;top:391.48px;width:25px;height:7.36px;line-height:7.36px;font-size:5.9px;font-weight:400;color:#1c1c1c;text-align:center;padding:0 0px;">29</div>
<div class="t" style="left:702px;top:391.48px;width:28.4px;height:7.36px;line-height:7.36px;font-size:5.9px;font-weight:400;color:#0f3a12;text-align:center;padding:0 0px;">green</div>
<div class="t" style="left:730.4px;top:391.48px;width:17.6px;height:7.36px;line-height:7.36px;font-size:5.9px;font-weight:400;color:#1c1c1c;text-align:right;padding:0 1px;">0%</div>
<div class="t" style="left:15px;top:398.84px;width:25.5px;height:7.36px;line-height:7.36px;font-size:5.9px;font-weight:400;color:#1c1c1c;text-align:center;padding:0 0px;">4.1</div>
<div class="t" style="left:40.5px;top:398.84px;width:27.8px;height:7.36px;line-height:7.36px;font-size:5.9px;font-weight:400;color:#1c1c1c;text-align:center;padding:0 0px;">4TTF11</div>
<div class="t" style="left:69.3px;top:398.84px;width:218.2px;height:7.36px;line-height:7.36px;font-size:5.9px;font-weight:400;color:#1c1c1c;text-align:left;padding:0 0.6px;">&nbsp;&nbsp;&nbsp;&nbsp; Create Daily Log</div>
<div class="t" style="left:288.5px;top:398.84px;width:96px;height:7.36px;line-height:7.36px;font-size:5.9px;font-weight:400;color:#1c1c1c;text-align:left;padding:0 0.6px;">Ian Fraser Kilmister</div>
<div class="t" style="left:355.5px;top:398.84px;width:121px;height:7.36px;line-height:7.36px;font-size:5.9px;font-weight:400;color:#1c1c1c;text-align:left;padding:0 0.6px;">Notes Creator</div>
<div class="t" style="left:489px;top:398.84px;width:37px;height:7.36px;line-height:7.36px;font-size:5.9px;font-weight:400;color:#1c1c1c;text-align:center;padding:0 0px;">07/01/2024</div>
<div class="t" style="left:526px;top:398.84px;width:36px;height:7.36px;line-height:7.36px;font-size:5.9px;font-weight:400;color:#1c1c1c;text-align:center;padding:0 0px;">27/01/2024</div>
<div class="t" style="left:562px;top:398.84px;width:23px;height:7.36px;line-height:7.36px;font-size:5.9px;font-weight:400;color:#1c1c1c;text-align:center;padding:0 0px;">15</div>
<div class="t" style="left:585px;top:398.84px;width:36px;height:7.36px;line-height:7.36px;font-size:5.9px;font-weight:400;color:#1c1c1c;text-align:center;padding:0 0px;">07/01/2024</div>
<div class="t" style="left:621px;top:398.84px;width:35px;height:7.36px;line-height:7.36px;font-size:5.9px;font-weight:400;color:#1c1c1c;text-align:center;padding:0 0px;">27/01/2024</div>
<div class="t" style="left:656px;top:398.84px;width:21px;height:7.36px;line-height:7.36px;font-size:5.9px;font-weight:400;color:#1c1c1c;text-align:center;padding:0 0px;">15</div>
<div class="t" style="left:677px;top:398.84px;width:25px;height:7.36px;line-height:7.36px;font-size:5.9px;font-weight:400;color:#1c1c1c;text-align:center;padding:0 0px;">24</div>
<div class="t" style="left:702px;top:398.84px;width:28.4px;height:7.36px;line-height:7.36px;font-size:5.9px;font-weight:400;color:#0f3a12;text-align:center;padding:0 0px;">green</div>
<div class="t" style="left:730.4px;top:398.84px;width:17.6px;height:7.36px;line-height:7.36px;font-size:5.9px;font-weight:400;color:#1c1c1c;text-align:right;padding:0 1px;">0%</div>
<div class="t" style="left:15px;top:406.2px;width:25.5px;height:7.36px;line-height:7.36px;font-size:5.9px;font-weight:400;color:#1c1c1c;text-align:center;padding:0 0px;">4.1</div>
<div class="t" style="left:40.5px;top:406.2px;width:27.8px;height:7.36px;line-height:7.36px;font-size:5.9px;font-weight:400;color:#1c1c1c;text-align:center;padding:0 0px;">4TTF12</div>
<div class="t" style="left:69.3px;top:406.2px;width:218.2px;height:7.36px;line-height:7.36px;font-size:5.9px;font-weight:400;color:#1c1c1c;text-align:left;padding:0 0.6px;"><b style="font-size:5.6px;color:#7a3fb5">Appoint Project Manager</b></div>
<div class="t" style="left:489px;top:406.2px;width:37px;height:7.36px;line-height:7.36px;font-size:5.9px;font-weight:400;color:#1c1c1c;text-align:center;padding:0 0px;">08/01/2024</div>
<div class="t" style="left:526px;top:406.2px;width:36px;height:7.36px;line-height:7.36px;font-size:5.9px;font-weight:400;color:#1c1c1c;text-align:center;padding:0 0px;">28/01/2024</div>
<div class="t" style="left:562px;top:406.2px;width:23px;height:7.36px;line-height:7.36px;font-size:5.9px;font-weight:400;color:#1c1c1c;text-align:center;padding:0 0px;">15</div>
<div class="t" style="left:585px;top:406.2px;width:36px;height:7.36px;line-height:7.36px;font-size:5.9px;font-weight:400;color:#1c1c1c;text-align:center;padding:0 0px;">08/01/2024</div>
<div class="t" style="left:621px;top:406.2px;width:35px;height:7.36px;line-height:7.36px;font-size:5.9px;font-weight:400;color:#1c1c1c;text-align:center;padding:0 0px;">28/01/2024</div>
<div class="t" style="left:656px;top:406.2px;width:21px;height:7.36px;line-height:7.36px;font-size:5.9px;font-weight:400;color:#1c1c1c;text-align:center;padding:0 0px;">15</div>
<div class="t" style="left:702px;top:406.2px;width:28.4px;height:7.36px;line-height:7.36px;font-size:5.9px;font-weight:400;color:#1c1c1c;text-align:center;padding:0 0px;">N/A</div>
<div class="t" style="left:730.4px;top:406.2px;width:17.6px;height:7.36px;line-height:7.36px;font-size:5.9px;font-weight:400;color:#1c1c1c;text-align:left;padding:0 1px;">N/A</div>
<div class="t" style="left:15px;top:413.56px;width:25.5px;height:7.36px;line-height:7.36px;font-size:5.9px;font-weight:400;color:#1c1c1c;text-align:center;padding:0 0px;">4.1</div>
<div class="t" style="left:40.5px;top:413.56px;width:27.8px;height:7.36px;line-height:7.36px;font-size:5.9px;font-weight:400;color:#1c1c1c;text-align:center;padding:0 0px;">4TTF13</div>
<div class="t" style="left:69.3px;top:413.56px;width:218.2px;height:7.36px;line-height:7.36px;font-size:5.9px;font-weight:400;color:#1c1c1c;text-align:left;padding:0 0.6px;"><b style="font-size:5.6px;color:#7a3fb5">Appoint Management Team</b></div>
<div class="t" style="left:489px;top:413.56px;width:37px;height:7.36px;line-height:7.36px;font-size:5.9px;font-weight:400;color:#1c1c1c;text-align:center;padding:0 0px;">09/01/2024</div>
<div class="t" style="left:526px;top:413.56px;width:36px;height:7.36px;line-height:7.36px;font-size:5.9px;font-weight:400;color:#1c1c1c;text-align:center;padding:0 0px;">29/01/2024</div>
<div class="t" style="left:562px;top:413.56px;width:23px;height:7.36px;line-height:7.36px;font-size:5.9px;font-weight:400;color:#1c1c1c;text-align:center;padding:0 0px;">15</div>
<div class="t" style="left:585px;top:413.56px;width:36px;height:7.36px;line-height:7.36px;font-size:5.9px;font-weight:400;color:#1c1c1c;text-align:center;padding:0 0px;">09/01/2024</div>
<div class="t" style="left:621px;top:413.56px;width:35px;height:7.36px;line-height:7.36px;font-size:5.9px;font-weight:400;color:#1c1c1c;text-align:center;padding:0 0px;">29/01/2024</div>
<div class="t" style="left:656px;top:413.56px;width:21px;height:7.36px;line-height:7.36px;font-size:5.9px;font-weight:400;color:#1c1c1c;text-align:center;padding:0 0px;">15</div>
<div class="t" style="left:677px;top:413.56px;width:25px;height:7.36px;line-height:7.36px;font-size:5.9px;font-weight:400;color:#1c1c1c;text-align:center;padding:0 0px;">29</div>
<div class="t" style="left:702px;top:413.56px;width:28.4px;height:7.36px;line-height:7.36px;font-size:5.9px;font-weight:400;color:#0f3a12;text-align:center;padding:0 0px;">green</div>
<div class="t" style="left:730.4px;top:413.56px;width:17.6px;height:7.36px;line-height:7.36px;font-size:5.9px;font-weight:400;color:#1c1c1c;text-align:right;padding:0 1px;">0%</div>
<div class="t" style="left:15px;top:420.92px;width:25.5px;height:7.36px;line-height:7.36px;font-size:5.9px;font-weight:400;color:#1c1c1c;text-align:center;padding:0 0px;">4.1</div>
<div class="t" style="left:40.5px;top:420.92px;width:27.8px;height:7.36px;line-height:7.36px;font-size:5.9px;font-weight:400;color:#1c1c1c;text-align:center;padding:0 0px;">4TTF14</div>
<div class="t" style="left:69.3px;top:420.92px;width:218.2px;height:7.36px;line-height:7.36px;font-size:5.9px;font-weight:400;color:#1c1c1c;text-align:left;padding:0 0.6px;">Prepare Outline Case</div>
<div class="t" style="left:288.5px;top:420.92px;width:96px;height:7.36px;line-height:7.36px;font-size:5.9px;font-weight:400;color:#1c1c1c;text-align:left;padding:0 0.6px;">James Patrick Page</div>
<div class="t" style="left:355.5px;top:420.92px;width:121px;height:7.36px;line-height:7.36px;font-size:5.9px;font-weight:400;color:#1c1c1c;text-align:left;padding:0 0.6px;">Producer</div>
<div class="t" style="left:489px;top:420.92px;width:37px;height:7.36px;line-height:7.36px;font-size:5.9px;font-weight:400;color:#1c1c1c;text-align:center;padding:0 0px;">10/01/2024</div>
<div class="t" style="left:526px;top:420.92px;width:36px;height:7.36px;line-height:7.36px;font-size:5.9px;font-weight:400;color:#1c1c1c;text-align:center;padding:0 0px;">30/01/2024</div>
<div class="t" style="left:562px;top:420.92px;width:23px;height:7.36px;line-height:7.36px;font-size:5.9px;font-weight:400;color:#1c1c1c;text-align:center;padding:0 0px;">15</div>
<div class="t" style="left:585px;top:420.92px;width:36px;height:7.36px;line-height:7.36px;font-size:5.9px;font-weight:400;color:#1c1c1c;text-align:center;padding:0 0px;">10/01/2024</div>
<div class="t" style="left:621px;top:420.92px;width:35px;height:7.36px;line-height:7.36px;font-size:5.9px;font-weight:400;color:#1c1c1c;text-align:center;padding:0 0px;">30/01/2024</div>
<div class="t" style="left:656px;top:420.92px;width:21px;height:7.36px;line-height:7.36px;font-size:5.9px;font-weight:400;color:#1c1c1c;text-align:center;padding:0 0px;">15</div>
<div class="t" style="left:677px;top:420.92px;width:25px;height:7.36px;line-height:7.36px;font-size:5.9px;font-weight:400;color:#1c1c1c;text-align:center;padding:0 0px;">24</div>
<div class="t" style="left:702px;top:420.92px;width:28.4px;height:7.36px;line-height:7.36px;font-size:5.9px;font-weight:400;color:#0f3a12;text-align:center;padding:0 0px;">green</div>
<div class="t" style="left:730.4px;top:420.92px;width:17.6px;height:7.36px;line-height:7.36px;font-size:5.9px;font-weight:400;color:#1c1c1c;text-align:right;padding:0 1px;">0%</div>
<div class="t" style="left:15px;top:428.28px;width:25.5px;height:7.36px;line-height:7.36px;font-size:5.9px;font-weight:400;color:#1c1c1c;text-align:center;padding:0 0px;">4.1</div>
<div class="t" style="left:40.5px;top:428.28px;width:27.8px;height:7.36px;line-height:7.36px;font-size:5.9px;font-weight:400;color:#1c1c1c;text-align:center;padding:0 0px;">4TTF15</div>
<div class="t" style="left:69.3px;top:428.28px;width:218.2px;height:7.36px;line-height:7.36px;font-size:5.9px;font-weight:400;color:#1c1c1c;text-align:left;padding:0 0.6px;">Identify Project Brief</div>
<div class="t" style="left:489px;top:428.28px;width:37px;height:7.36px;line-height:7.36px;font-size:5.9px;font-weight:400;color:#1c1c1c;text-align:center;padding:0 0px;">11/01/2024</div>
<div class="t" style="left:526px;top:428.28px;width:36px;height:7.36px;line-height:7.36px;font-size:5.9px;font-weight:400;color:#1c1c1c;text-align:center;padding:0 0px;">31/01/2024</div>
<div class="t" style="left:562px;top:428.28px;width:23px;height:7.36px;line-height:7.36px;font-size:5.9px;font-weight:400;color:#1c1c1c;text-align:center;padding:0 0px;">15</div>
<div class="t" style="left:585px;top:428.28px;width:36px;height:7.36px;line-height:7.36px;font-size:5.9px;font-weight:400;color:#1c1c1c;text-align:center;padding:0 0px;">11/01/2024</div>
<div class="t" style="left:621px;top:428.28px;width:35px;height:7.36px;line-height:7.36px;font-size:5.9px;font-weight:400;color:#1c1c1c;text-align:center;padding:0 0px;">31/01/2024</div>
<div class="t" style="left:656px;top:428.28px;width:21px;height:7.36px;line-height:7.36px;font-size:5.9px;font-weight:400;color:#1c1c1c;text-align:center;padding:0 0px;">15</div>
<div class="t" style="left:677px;top:428.28px;width:25px;height:7.36px;line-height:7.36px;font-size:5.9px;font-weight:400;color:#1c1c1c;text-align:center;padding:0 0px;">29</div>
<div class="t" style="left:702px;top:428.28px;width:28.4px;height:7.36px;line-height:7.36px;font-size:5.9px;font-weight:400;color:#0f3a12;text-align:center;padding:0 0px;">green</div>
<div class="t" style="left:730.4px;top:428.28px;width:17.6px;height:7.36px;line-height:7.36px;font-size:5.9px;font-weight:400;color:#1c1c1c;text-align:right;padding:0 1px;">0%</div>
<div class="t" style="left:15px;top:435.64px;width:25.5px;height:7.36px;line-height:7.36px;font-size:5.9px;font-weight:400;color:#1c1c1c;text-align:center;padding:0 0px;">4.1</div>
<div class="t" style="left:40.5px;top:435.64px;width:27.8px;height:7.36px;line-height:7.36px;font-size:5.9px;font-weight:400;color:#1c1c1c;text-align:center;padding:0 0px;">4TTF16</div>
<div class="t" style="left:69.3px;top:435.64px;width:218.2px;height:7.36px;line-height:7.36px;font-size:5.9px;font-weight:400;color:#1c1c1c;text-align:left;padding:0 0.6px;">Define Final Calendar of Events</div>
<div class="t" style="left:288.5px;top:435.64px;width:96px;height:7.36px;line-height:7.36px;font-size:5.9px;font-weight:400;color:#1c1c1c;text-align:left;padding:0 0.6px;">Richard Blackmore</div>
<div class="t" style="left:355.5px;top:435.64px;width:121px;height:7.36px;line-height:7.36px;font-size:5.9px;font-weight:400;color:#1c1c1c;text-align:left;padding:0 0.6px;">Writer</div>
<div class="t" style="left:489px;top:435.64px;width:37px;height:7.36px;line-height:7.36px;font-size:5.9px;font-weight:400;color:#1c1c1c;text-align:center;padding:0 0px;">12/01/2024</div>
<div class="t" style="left:526px;top:435.64px;width:36px;height:7.36px;line-height:7.36px;font-size:5.9px;font-weight:400;color:#1c1c1c;text-align:center;padding:0 0px;">01/02/2024</div>
<div class="t" style="left:562px;top:435.64px;width:23px;height:7.36px;line-height:7.36px;font-size:5.9px;font-weight:400;color:#1c1c1c;text-align:center;padding:0 0px;">15</div>
<div class="t" style="left:585px;top:435.64px;width:36px;height:7.36px;line-height:7.36px;font-size:5.9px;font-weight:400;color:#1c1c1c;text-align:center;padding:0 0px;">12/01/2024</div>
<div class="t" style="left:621px;top:435.64px;width:35px;height:7.36px;line-height:7.36px;font-size:5.9px;font-weight:400;color:#1c1c1c;text-align:center;padding:0 0px;">01/02/2024</div>
<div class="t" style="left:656px;top:435.64px;width:21px;height:7.36px;line-height:7.36px;font-size:5.9px;font-weight:400;color:#1c1c1c;text-align:center;padding:0 0px;">15</div>
<div class="t" style="left:677px;top:435.64px;width:25px;height:7.36px;line-height:7.36px;font-size:5.9px;font-weight:400;color:#1c1c1c;text-align:center;padding:0 0px;">29</div>
<div class="t" style="left:702px;top:435.64px;width:28.4px;height:7.36px;line-height:7.36px;font-size:5.9px;font-weight:400;color:#0f3a12;text-align:center;padding:0 0px;">green</div>
<div class="t" style="left:730.4px;top:435.64px;width:17.6px;height:7.36px;line-height:7.36px;font-size:5.9px;font-weight:400;color:#1c1c1c;text-align:right;padding:0 1px;">0%</div>
<div class="t" style="left:15px;top:443px;width:25.5px;height:7.36px;line-height:7.36px;font-size:5.9px;font-weight:400;color:#1c1c1c;text-align:center;padding:0 0px;">4.1</div>
<div class="t" style="left:40.5px;top:443px;width:27.8px;height:7.36px;line-height:7.36px;font-size:5.9px;font-weight:400;color:#1c1c1c;text-align:center;padding:0 0px;">4TTF17</div>
<div class="t" style="left:69.3px;top:443px;width:218.2px;height:7.36px;line-height:7.36px;font-size:5.9px;font-weight:400;color:#1c1c1c;text-align:left;padding:0 0.6px;">Capture Previous Lessons</div>
<div class="t" style="left:489px;top:443px;width:37px;height:7.36px;line-height:7.36px;font-size:5.9px;font-weight:400;color:#1c1c1c;text-align:center;padding:0 0px;">15/01/2024</div>
<div class="t" style="left:526px;top:443px;width:36px;height:7.36px;line-height:7.36px;font-size:5.9px;font-weight:400;color:#1c1c1c;text-align:center;padding:0 0px;">02/02/2024</div>
<div class="t" style="left:562px;top:443px;width:23px;height:7.36px;line-height:7.36px;font-size:5.9px;font-weight:400;color:#1c1c1c;text-align:center;padding:0 0px;">15</div>
<div class="t" style="left:585px;top:443px;width:36px;height:7.36px;line-height:7.36px;font-size:5.9px;font-weight:400;color:#1c1c1c;text-align:center;padding:0 0px;">15/01/2024</div>
<div class="t" style="left:621px;top:443px;width:35px;height:7.36px;line-height:7.36px;font-size:5.9px;font-weight:400;color:#1c1c1c;text-align:center;padding:0 0px;">02/02/2024</div>
<div class="t" style="left:656px;top:443px;width:21px;height:7.36px;line-height:7.36px;font-size:5.9px;font-weight:400;color:#1c1c1c;text-align:center;padding:0 0px;">15</div>
<div class="t" style="left:702px;top:443px;width:28.4px;height:7.36px;line-height:7.36px;font-size:5.9px;font-weight:400;color:#1c1c1c;text-align:center;padding:0 0px;">N/A</div>
<div class="t" style="left:730.4px;top:443px;width:17.6px;height:7.36px;line-height:7.36px;font-size:5.9px;font-weight:400;color:#1c1c1c;text-align:left;padding:0 1px;">N/A</div>
<div class="t" style="left:15px;top:450.36px;width:25.5px;height:7.36px;line-height:7.36px;font-size:5.9px;font-weight:400;color:#1c1c1c;text-align:center;padding:0 0px;">4.1</div>
<div class="t" style="left:40.5px;top:450.36px;width:27.8px;height:7.36px;line-height:7.36px;font-size:5.9px;font-weight:400;color:#1c1c1c;text-align:center;padding:0 0px;">4TTF18</div>
<div class="t" style="left:69.3px;top:450.36px;width:218.2px;height:7.36px;line-height:7.36px;font-size:5.9px;font-weight:400;color:#1c1c1c;text-align:left;padding:0 0.6px;"><b style="font-size:5.6px;color:#bf9000">Plan Initiation</b></div>
<div class="t" style="left:489px;top:450.36px;width:37px;height:7.36px;line-height:7.36px;font-size:5.9px;font-weight:400;color:#1c1c1c;text-align:center;padding:0 0px;">08/02/2024</div>
<div class="t" style="left:526px;top:450.36px;width:36px;height:7.36px;line-height:7.36px;font-size:5.9px;font-weight:400;color:#1c1c1c;text-align:center;padding:0 0px;">08/02/2024</div>
<div class="t" style="left:562px;top:450.36px;width:23px;height:7.36px;line-height:7.36px;font-size:5.9px;font-weight:400;color:#1c1c1c;text-align:center;padding:0 0px;">1</div>
<div class="t" style="left:585px;top:450.36px;width:36px;height:7.36px;line-height:7.36px;font-size:5.9px;font-weight:400;color:#1c1c1c;text-align:center;padding:0 0px;">08/02/2024</div>
<div class="t" style="left:621px;top:450.36px;width:35px;height:7.36px;line-height:7.36px;font-size:5.9px;font-weight:400;color:#1c1c1c;text-align:center;padding:0 0px;">08/02/2024</div>
<div class="t" style="left:656px;top:450.36px;width:21px;height:7.36px;line-height:7.36px;font-size:5.9px;font-weight:400;color:#1c1c1c;text-align:center;padding:0 0px;">1</div>
<div class="t" style="left:677px;top:450.36px;width:25px;height:7.36px;line-height:7.36px;font-size:5.9px;font-weight:400;color:#1c1c1c;text-align:center;padding:0 0px;">29</div>
<div class="t" style="left:702px;top:450.36px;width:28.4px;height:7.36px;line-height:7.36px;font-size:5.9px;font-weight:400;color:#0f3a12;text-align:center;padding:0 0px;">green</div>
<div class="t" style="left:730.4px;top:450.36px;width:17.6px;height:7.36px;line-height:7.36px;font-size:5.9px;font-weight:400;color:#1c1c1c;text-align:right;padding:0 1px;">0%</div>
<div class="t" style="left:15px;top:457.72px;width:25.5px;height:7.36px;line-height:7.36px;font-size:5.9px;font-weight:400;color:#1c1c1c;text-align:center;padding:0 0px;">4.1</div>
<div class="t" style="left:40.5px;top:457.72px;width:27.8px;height:7.36px;line-height:7.36px;font-size:5.9px;font-weight:400;color:#1c1c1c;text-align:center;padding:0 0px;">4TTF19</div>
<div class="t" style="left:69.3px;top:457.72px;width:218.2px;height:7.36px;line-height:7.36px;font-size:5.9px;font-weight:400;color:#1c1c1c;text-align:left;padding:0 0.6px;">Starting a Project (SP) Close</div>
<div class="t" style="left:489px;top:457.72px;width:37px;height:7.36px;line-height:7.36px;font-size:5.9px;font-weight:400;color:#1c1c1c;text-align:center;padding:0 0px;">09/02/2024</div>
<div class="t" style="left:526px;top:457.72px;width:36px;height:7.36px;line-height:7.36px;font-size:5.9px;font-weight:400;color:#1c1c1c;text-align:center;padding:0 0px;">09/02/2024</div>
<div class="t" style="left:562px;top:457.72px;width:23px;height:7.36px;line-height:7.36px;font-size:5.9px;font-weight:400;color:#1c1c1c;text-align:center;padding:0 0px;">1</div>
<div class="t" style="left:585px;top:457.72px;width:36px;height:7.36px;line-height:7.36px;font-size:5.9px;font-weight:400;color:#1c1c1c;text-align:center;padding:0 0px;">09/02/2024</div>
<div class="t" style="left:621px;top:457.72px;width:35px;height:7.36px;line-height:7.36px;font-size:5.9px;font-weight:400;color:#1c1c1c;text-align:center;padding:0 0px;">09/02/2024</div>
<div class="t" style="left:656px;top:457.72px;width:21px;height:7.36px;line-height:7.36px;font-size:5.9px;font-weight:400;color:#1c1c1c;text-align:center;padding:0 0px;">1</div>
<div class="t" style="left:677px;top:457.72px;width:25px;height:7.36px;line-height:7.36px;font-size:5.9px;font-weight:400;color:#1c1c1c;text-align:center;padding:0 0px;">29</div>
<div class="t" style="left:702px;top:457.72px;width:28.4px;height:7.36px;line-height:7.36px;font-size:5.9px;font-weight:400;color:#0f3a12;text-align:center;padding:0 0px;">green</div>
<div class="t" style="left:730.4px;top:457.72px;width:17.6px;height:7.36px;line-height:7.36px;font-size:5.9px;font-weight:400;color:#1c1c1c;text-align:right;padding:0 1px;">0%</div>
<div style="left:15px;top:126px;width:733px;height:1px;background:#e6e6e6"></div>
<div style="left:15px;top:368px;width:733px;height:1px;background:#e6e6e6"></div>
<div style="left:40px;top:126.5px;width:1px;height:64.71px;background:#e6e6e6"></div>
<div style="left:68px;top:126.5px;width:1px;height:64.71px;background:#e6e6e6"></div>
<div style="left:287px;top:126.5px;width:1px;height:64.71px;background:#e6e6e6"></div>
<div style="left:354px;top:126.5px;width:1px;height:64.71px;background:#e6e6e6"></div>
<div style="left:446px;top:126.5px;width:1px;height:64.71px;background:#e6e6e6"></div>
<div style="left:488px;top:126.5px;width:1px;height:64.71px;background:#e6e6e6"></div>
<div style="left:525px;top:126.5px;width:1px;height:64.71px;background:#e6e6e6"></div>
<div style="left:561px;top:126.5px;width:1px;height:64.71px;background:#e6e6e6"></div>
<div style="left:584px;top:126.5px;width:1px;height:64.71px;background:#e6e6e6"></div>
<div style="left:620px;top:126.5px;width:1px;height:64.71px;background:#e6e6e6"></div>
<div style="left:655px;top:126.5px;width:1px;height:64.71px;background:#e6e6e6"></div>
<div style="left:676px;top:126.5px;width:1px;height:64.71px;background:#e6e6e6"></div>
<div style="left:701px;top:126.5px;width:1px;height:64.71px;background:#e6e6e6"></div>
<div style="left:730px;top:126.5px;width:1px;height:64.71px;background:#e6e6e6"></div>
<div style="left:14.6px;top:126.5px;width:0.7px;height:64.71px;background:#e6e6e6"></div>
<div style="left:40px;top:207.5px;width:1px;height:115.84px;background:#e6e6e6"></div>
<div style="left:68px;top:207.5px;width:1px;height:115.84px;background:#e6e6e6"></div>
<div style="left:287px;top:207.5px;width:1px;height:115.84px;background:#e6e6e6"></div>
<div style="left:354px;top:207.5px;width:1px;height:115.84px;background:#e6e6e6"></div>
<div style="left:446px;top:207.5px;width:1px;height:115.84px;background:#e6e6e6"></div>
<div style="left:488px;top:207.5px;width:1px;height:115.84px;background:#e6e6e6"></div>
<div style="left:525px;top:207.5px;width:1px;height:115.84px;background:#e6e6e6"></div>
<div style="left:561px;top:207.5px;width:1px;height:115.84px;background:#e6e6e6"></div>
<div style="left:584px;top:207.5px;width:1px;height:115.84px;background:#e6e6e6"></div>
<div style="left:620px;top:207.5px;width:1px;height:115.84px;background:#e6e6e6"></div>
<div style="left:655px;top:207.5px;width:1px;height:115.84px;background:#e6e6e6"></div>
<div style="left:676px;top:207.5px;width:1px;height:115.84px;background:#e6e6e6"></div>
<div style="left:701px;top:207.5px;width:1px;height:115.84px;background:#e6e6e6"></div>
<div style="left:730px;top:207.5px;width:1px;height:115.84px;background:#e6e6e6"></div>
<div style="left:14.6px;top:207.5px;width:0.7px;height:115.84px;background:#e6e6e6"></div>
<div style="left:40px;top:368.5px;width:1px;height:95.68px;background:#e6e6e6"></div>
<div style="left:68px;top:368.5px;width:1px;height:95.68px;background:#e6e6e6"></div>
<div style="left:287px;top:368.5px;width:1px;height:95.68px;background:#e6e6e6"></div>
<div style="left:354px;top:368.5px;width:1px;height:95.68px;background:#e6e6e6"></div>
<div style="left:446px;top:368.5px;width:1px;height:95.68px;background:#e6e6e6"></div>
<div style="left:488px;top:368.5px;width:1px;height:95.68px;background:#e6e6e6"></div>
<div style="left:525px;top:368.5px;width:1px;height:95.68px;background:#e6e6e6"></div>
<div style="left:561px;top:368.5px;width:1px;height:95.68px;background:#e6e6e6"></div>
<div style="left:584px;top:368.5px;width:1px;height:95.68px;background:#e6e6e6"></div>
<div style="left:620px;top:368.5px;width:1px;height:95.68px;background:#e6e6e6"></div>
<div style="left:655px;top:368.5px;width:1px;height:95.68px;background:#e6e6e6"></div>
<div style="left:676px;top:368.5px;width:1px;height:95.68px;background:#e6e6e6"></div>
<div style="left:701px;top:368.5px;width:1px;height:95.68px;background:#e6e6e6"></div>
<div style="left:730px;top:368.5px;width:1px;height:95.68px;background:#e6e6e6"></div>
<div style="left:14.6px;top:368.5px;width:0.7px;height:95.68px;background:#e6e6e6"></div>
<div style="left:748px;top:126.5px;width:1px;height:71.8px;background:#c4c4c4"></div>
<div style="left:748px;top:207.5px;width:1px;height:115.84px;background:#c4c4c4"></div>
<div style="left:748px;top:352.5px;width:1px;height:7.1px;background:#6a6a6a"></div>
<div style="left:748px;top:368.5px;width:1px;height:95.68px;background:#6a6a6a"></div>
<div style="left:15px;top:117.3px;width:27.5px;height:9.2px;background:#9bc2e6;border-top:0.9px solid #4d5d70;border-bottom:0.9px solid #4d5d70;border-right:0.7px solid #4d5d70"></div>
<div style="left:42.5px;top:117.3px;width:22.9px;height:9.2px;background:#a9cbea;border:0.8px solid #e4eef8;border-bottom:0.9px solid #4d5d70"></div>
<div style="left:65.4px;top:117.3px;width:762.6px;height:9.2px;background:#9bc2e6;border-top:0.9px solid #4d5d70;border-bottom:0.9px solid #4d5d70;border-left:0.9px solid #4d5d70;border-top-left-radius:1px"></div>
<div class="t" style="left:69.5px;top:117.6px;width:330.5px;height:9.2px;line-height:9.2px;font-size:6.4px;font-weight:700;color:#1f3255;text-align:left;padding:0 0.6px;">Initial Setup and Theoretical Planning</div>
<div style="left:15px;top:198.3px;width:27.5px;height:9.2px;background:#9bc2e6;border-top:0.9px solid #4d5d70;border-bottom:0.9px solid #4d5d70;border-right:0.7px solid #4d5d70"></div>
<div style="left:42.5px;top:198.3px;width:22.9px;height:9.2px;background:#a9cbea;border:0.8px solid #e4eef8;border-bottom:0.9px solid #4d5d70"></div>
<div style="left:65.4px;top:198.3px;width:762.6px;height:9.2px;background:#9bc2e6;border-top:0.9px solid #4d5d70;border-bottom:0.9px solid #4d5d70;border-left:0.9px solid #4d5d70;border-top-left-radius:1px"></div>
<div class="t" style="left:69.5px;top:198.6px;width:330.5px;height:9.2px;line-height:9.2px;font-size:6.4px;font-weight:700;color:#1f3255;text-align:left;padding:0 0.6px;">Project Milestones</div>
<div style="left:15px;top:343.3px;width:27.5px;height:9.2px;background:#9bc2e6;border-top:0.9px solid #4d5d70;border-bottom:0.9px solid #4d5d70;border-right:0.7px solid #4d5d70"></div>
<div style="left:42.5px;top:343.3px;width:22.9px;height:9.2px;background:#d3e3f2;border-top:0.8px solid #c8c8c8"></div>
<div style="left:65.4px;top:343.3px;width:762.6px;height:9.2px;background:#9bc2e6;border-top:0.9px solid #4d5d70;border-bottom:0.9px solid #4d5d70;border-left:0.9px solid #4d5d70;border-top-left-radius:1px"></div>
<div class="t" style="left:69.5px;top:343.6px;width:330.5px;height:9.2px;line-height:9.2px;font-size:6.4px;font-weight:700;color:#1f3255;text-align:left;padding:0 0.6px;">Dependencies</div>
<div style="left:15px;top:359.6px;width:27.5px;height:8.9px;background:#9bc2e6;border-top:0.9px solid #4d5d70;border-bottom:0.9px solid #4d5d70;border-right:0.7px solid #4d5d70"></div>
<div style="left:42.5px;top:359.6px;width:22.9px;height:8.9px;background:#a9cbea;border:0.8px solid #e4eef8;border-bottom:0.9px solid #4d5d70"></div>
<div style="left:65.4px;top:359.6px;width:762.6px;height:8.9px;background:#9bc2e6;border-top:0.9px solid #4d5d70;border-bottom:0.9px solid #4d5d70;border-left:0.9px solid #4d5d70;border-top-left-radius:1px"></div>
<div class="t" style="left:69.5px;top:359.9px;width:330.5px;height:8.9px;line-height:8.9px;font-size:6.4px;font-weight:700;color:#1f3255;text-align:left;padding:0 0.6px;">Starting the Project (SP) Start</div>
<div style="left:828px;top:90.4px;width:119px;height:26.9px;background:#97a8c0;border-top:0.8px solid #3d4654;border-bottom:0.8px solid #3d4654;"></div>
<div class="t" style="left:823.5px;top:97.2px;width:20px;height:7px;line-height:7px;font-size:4.9px;font-weight:700;color:#000;text-align:center;transform:rotate(-90deg)">01-Jan</div>
<div class="t" style="left:834.5px;top:97.2px;width:20px;height:7px;line-height:7px;font-size:4.9px;font-weight:700;color:#000;text-align:center;transform:rotate(-90deg)">02-Jan</div>
<div class="t" style="left:845.5px;top:97.2px;width:20px;height:7px;line-height:7px;font-size:4.9px;font-weight:700;color:#000;text-align:center;transform:rotate(-90deg)">03-Jan</div>
<div class="t" style="left:856.5px;top:97.2px;width:20px;height:7px;line-height:7px;font-size:4.9px;font-weight:700;color:#000;text-align:center;transform:rotate(-90deg)">04-Jan</div>
<div class="t" style="left:867.5px;top:97.2px;width:20px;height:7px;line-height:7px;font-size:4.9px;font-weight:700;color:#000;text-align:center;transform:rotate(-90deg)">05-Jan</div>
<div style="left:883.5px;top:91.2px;width:10.2px;height:18px;background:#cfe0f3;border:0.8px solid #e4eef9;"></div>
<div class="t" style="left:878.5px;top:97.2px;width:20px;height:7px;line-height:7px;font-size:4.9px;font-weight:700;color:#000;text-align:center;transform:rotate(-90deg)">06-Jan</div>
<div style="left:894.5px;top:91.2px;width:10.2px;height:18px;background:#cfe0f3;border:0.8px solid #e4eef9;"></div>
<div class="t" style="left:889.5px;top:97.2px;width:20px;height:7px;line-height:7px;font-size:4.9px;font-weight:700;color:#000;text-align:center;transform:rotate(-90deg)">07-Jan</div>
<div class="t" style="left:900.5px;top:97.2px;width:20px;height:7px;line-height:7px;font-size:4.9px;font-weight:700;color:#000;text-align:center;transform:rotate(-90deg)">08-Jan</div>
<div class="t" style="left:911.5px;top:97.2px;width:20px;height:7px;line-height:7px;font-size:4.9px;font-weight:700;color:#000;text-align:center;transform:rotate(-90deg)">09-Jan</div>
<div class="t" style="left:922.5px;top:97.2px;width:20px;height:7px;line-height:7px;font-size:4.9px;font-weight:700;color:#000;text-align:center;transform:rotate(-90deg)">10-Jan</div>
<div class="t" style="left:933.5px;top:97.2px;width:20px;height:7px;line-height:7px;font-size:4.9px;font-weight:700;color:#000;text-align:center;transform:rotate(-90deg)">11-Jan</div>
<div style="left:827.5px;top:90.4px;width:1.1px;height:19.6px;background:#3d4654"></div>
<div style="left:904.6px;top:90.4px;width:0.9px;height:19.6px;background:#3d4654"></div>
<div style="left:882.6px;top:90.4px;width:0.9px;height:19.6px;background:#3d4654"></div>
<div style="left:828px;top:110px;width:11.7px;height:7.3px;background:#a8b7cc;border:0.7px solid #3d4654"></div>
<div class="t" style="left:828px;top:110.3px;width:11px;height:7.3px;line-height:7.3px;font-size:5.5px;font-weight:700;color:#1a1a1a;text-align:center;padding:0 0px;">M</div>
<div style="left:839px;top:110px;width:11.7px;height:7.3px;background:#a8b7cc;border:0.7px solid #3d4654"></div>
<div class="t" style="left:839px;top:110.3px;width:11px;height:7.3px;line-height:7.3px;font-size:5.5px;font-weight:700;color:#1a1a1a;text-align:center;padding:0 0px;">T</div>
<div style="left:850px;top:110px;width:11.7px;height:7.3px;background:#a8b7cc;border:0.7px solid #3d4654"></div>
<div class="t" style="left:850px;top:110.3px;width:11px;height:7.3px;line-height:7.3px;font-size:5.5px;font-weight:700;color:#1a1a1a;text-align:center;padding:0 0px;">W</div>
<div style="left:861px;top:110px;width:11.7px;height:7.3px;background:#a8b7cc;border:0.7px solid #3d4654"></div>
<div class="t" style="left:861px;top:110.3px;width:11px;height:7.3px;line-height:7.3px;font-size:5.5px;font-weight:700;color:#1a1a1a;text-align:center;padding:0 0px;">T</div>
<div style="left:872px;top:110px;width:11.7px;height:7.3px;background:#a8b7cc;border:0.7px solid #3d4654"></div>
<div class="t" style="left:872px;top:110.3px;width:11px;height:7.3px;line-height:7.3px;font-size:5.5px;font-weight:700;color:#1a1a1a;text-align:center;padding:0 0px;">F</div>
<div style="left:883px;top:110px;width:11.7px;height:7.3px;background:#a8b7cc;border:0.7px solid #3d4654"></div>
<div class="t" style="left:883px;top:110.3px;width:11px;height:7.3px;line-height:7.3px;font-size:5.5px;font-weight:700;color:#1a1a1a;text-align:center;padding:0 0px;">S</div>
<div style="left:894px;top:110px;width:11.7px;height:7.3px;background:#a8b7cc;border:0.7px solid #3d4654"></div>
<div class="t" style="left:894px;top:110.3px;width:11px;height:7.3px;line-height:7.3px;font-size:5.5px;font-weight:700;color:#1a1a1a;text-align:center;padding:0 0px;">S</div>
<div style="left:905px;top:110px;width:11.7px;height:7.3px;background:#a8b7cc;border:0.7px solid #3d4654"></div>
<div class="t" style="left:905px;top:110.3px;width:11px;height:7.3px;line-height:7.3px;font-size:5.5px;font-weight:700;color:#1a1a1a;text-align:center;padding:0 0px;">M</div>
<div style="left:916px;top:110px;width:11.7px;height:7.3px;background:#a8b7cc;border:0.7px solid #3d4654"></div>
<div class="t" style="left:916px;top:110.3px;width:11px;height:7.3px;line-height:7.3px;font-size:5.5px;font-weight:700;color:#1a1a1a;text-align:center;padding:0 0px;">T</div>
<div style="left:927px;top:110px;width:11.7px;height:7.3px;background:#a8b7cc;border:0.7px solid #3d4654"></div>
<div class="t" style="left:927px;top:110.3px;width:11px;height:7.3px;line-height:7.3px;font-size:5.5px;font-weight:700;color:#1a1a1a;text-align:center;padding:0 0px;">W</div>
<div style="left:938px;top:110px;width:11.7px;height:7.3px;background:#a8b7cc;border:0.7px solid #3d4654"></div>
<div class="t" style="left:938px;top:110.3px;width:11px;height:7.3px;line-height:7.3px;font-size:5.5px;font-weight:700;color:#1a1a1a;text-align:center;padding:0 0px;">T</div>
<div style="left:828px;top:323.3px;width:119px;height:20px;background:#97a8c0;border-top:0.8px solid #3d4654;border-bottom:0.8px solid #3d4654;"></div>
<div class="t" style="left:823.5px;top:331.1px;width:20px;height:7px;line-height:7px;font-size:4.9px;font-weight:700;color:#000;text-align:center;transform:rotate(-90deg)">01-Jan</div>
<div class="t" style="left:834.5px;top:331.1px;width:20px;height:7px;line-height:7px;font-size:4.9px;font-weight:700;color:#000;text-align:center;transform:rotate(-90deg)">02-Jan</div>
<div class="t" style="left:845.5px;top:331.1px;width:20px;height:7px;line-height:7px;font-size:4.9px;font-weight:700;color:#000;text-align:center;transform:rotate(-90deg)">03-Jan</div>
<div class="t" style="left:856.5px;top:331.1px;width:20px;height:7px;line-height:7px;font-size:4.9px;font-weight:700;color:#000;text-align:center;transform:rotate(-90deg)">04-Jan</div>
<div class="t" style="left:867.5px;top:331.1px;width:20px;height:7px;line-height:7px;font-size:4.9px;font-weight:700;color:#000;text-align:center;transform:rotate(-90deg)">05-Jan</div>
<div style="left:883.5px;top:324.1px;width:10.2px;height:18.4px;background:#cfe0f3;border:0.8px solid #e4eef9;"></div>
<div class="t" style="left:878.5px;top:331.1px;width:20px;height:7px;line-height:7px;font-size:4.9px;font-weight:700;color:#000;text-align:center;transform:rotate(-90deg)">06-Jan</div>
<div style="left:894.5px;top:324.1px;width:10.2px;height:18.4px;background:#cfe0f3;border:0.8px solid #e4eef9;"></div>
<div class="t" style="left:889.5px;top:331.1px;width:20px;height:7px;line-height:7px;font-size:4.9px;font-weight:700;color:#000;text-align:center;transform:rotate(-90deg)">07-Jan</div>
<div class="t" style="left:900.5px;top:331.1px;width:20px;height:7px;line-height:7px;font-size:4.9px;font-weight:700;color:#000;text-align:center;transform:rotate(-90deg)">08-Jan</div>
<div class="t" style="left:911.5px;top:331.1px;width:20px;height:7px;line-height:7px;font-size:4.9px;font-weight:700;color:#000;text-align:center;transform:rotate(-90deg)">09-Jan</div>
<div class="t" style="left:922.5px;top:331.1px;width:20px;height:7px;line-height:7px;font-size:4.9px;font-weight:700;color:#000;text-align:center;transform:rotate(-90deg)">10-Jan</div>
<div class="t" style="left:933.5px;top:331.1px;width:20px;height:7px;line-height:7px;font-size:4.9px;font-weight:700;color:#000;text-align:center;transform:rotate(-90deg)">11-Jan</div>
<div style="left:827.5px;top:323.3px;width:1.1px;height:20px;background:#3d4654"></div>
<div style="left:904.6px;top:323.3px;width:0.9px;height:20px;background:#3d4654"></div>
<div style="left:882.6px;top:323.3px;width:0.9px;height:20px;background:#3d4654"></div>
<div style="left:828px;top:464.2px;width:119px;height:20.3px;background:#97a8c0;border-top:0.8px solid #3d4654;"></div>
<div class="t" style="left:823.5px;top:472px;width:20px;height:7px;line-height:7px;font-size:4.9px;font-weight:700;color:#000;text-align:center;transform:rotate(-90deg)">01-Jan</div>
<div class="t" style="left:834.5px;top:472px;width:20px;height:7px;line-height:7px;font-size:4.9px;font-weight:700;color:#000;text-align:center;transform:rotate(-90deg)">02-Jan</div>
<div class="t" style="left:845.5px;top:472px;width:20px;height:7px;line-height:7px;font-size:4.9px;font-weight:700;color:#000;text-align:center;transform:rotate(-90deg)">03-Jan</div>
<div class="t" style="left:856.5px;top:472px;width:20px;height:7px;line-height:7px;font-size:4.9px;font-weight:700;color:#000;text-align:center;transform:rotate(-90deg)">04-Jan</div>
<div class="t" style="left:867.5px;top:472px;width:20px;height:7px;line-height:7px;font-size:4.9px;font-weight:700;color:#000;text-align:center;transform:rotate(-90deg)">05-Jan</div>
<div style="left:883.5px;top:465px;width:10.2px;height:19.5px;background:#cfe0f3;border:0.8px solid #e4eef9;border-bottom:none;"></div>
<div class="t" style="left:878.5px;top:472px;width:20px;height:7px;line-height:7px;font-size:4.9px;font-weight:700;color:#000;text-align:center;transform:rotate(-90deg)">06-Jan</div>
<div style="left:894.5px;top:465px;width:10.2px;height:19.5px;background:#cfe0f3;border:0.8px solid #e4eef9;border-bottom:none;"></div>
<div class="t" style="left:889.5px;top:472px;width:20px;height:7px;line-height:7px;font-size:4.9px;font-weight:700;color:#000;text-align:center;transform:rotate(-90deg)">07-Jan</div>
<div class="t" style="left:900.5px;top:472px;width:20px;height:7px;line-height:7px;font-size:4.9px;font-weight:700;color:#000;text-align:center;transform:rotate(-90deg)">08-Jan</div>
<div class="t" style="left:911.5px;top:472px;width:20px;height:7px;line-height:7px;font-size:4.9px;font-weight:700;color:#000;text-align:center;transform:rotate(-90deg)">09-Jan</div>
<div class="t" style="left:922.5px;top:472px;width:20px;height:7px;line-height:7px;font-size:4.9px;font-weight:700;color:#000;text-align:center;transform:rotate(-90deg)">10-Jan</div>
<div class="t" style="left:933.5px;top:472px;width:20px;height:7px;line-height:7px;font-size:4.9px;font-weight:700;color:#000;text-align:center;transform:rotate(-90deg)">11-Jan</div>
<div style="left:827.5px;top:464.2px;width:1.1px;height:20.3px;background:#3d4654"></div>
<div style="left:904.6px;top:464.2px;width:0.9px;height:20.3px;background:#3d4654"></div>
<div style="left:882.6px;top:464.2px;width:0.9px;height:20.3px;background:#3d4654"></div>
<div style="left:883.4px;top:125.7px;width:21.4px;height:72.6px;background:#ababab"></div>
<div style="left:883.4px;top:206.7px;width:21.4px;height:116.64px;background:#ababab"></div>
<div style="left:883.4px;top:351.7px;width:21.4px;height:7.9px;background:#ababab"></div>
<div style="left:883.4px;top:367.7px;width:21.4px;height:96.48px;background:#ababab"></div>
<div style="left:827px;top:117px;width:1px;height:226.3px;background:#4a4f58"></div>
<div style="left:827px;top:343.3px;width:1px;height:139.7px;background:#4a4f58"></div>
<div style="left:828px;top:117.7px;width:99px;height:8.8px;background:#1b6fc0"></div>
<div style="left:927px;top:117.7px;width:20px;height:8.8px;background:#c55a11"></div>
<div class="t" style="left:829px;top:118.2px;width:118px;height:9.2px;line-height:9.2px;font-size:6.4px;font-weight:700;color:#ffffff;text-align:left;padding:0 0.8px;overflow:hidden">Initial Setup and Theoretical Planning</div>
<div style="left:861px;top:133.49px;width:86px;height:7.59px;background:#7030a0"></div>
<div style="left:828px;top:198.3px;width:99px;height:9.2px;background:#9bc2e6;border-top:0.9px solid #4d5d70;border-bottom:0.9px solid #4d5d70"></div>
<div style="left:927px;top:198px;width:20px;height:9.8px;background:#c55a11"></div>
<div class="t" style="left:927px;top:198.3px;width:20px;height:9.2px;line-height:9.2px;font-size:6.4px;font-weight:700;color:#ffffff;text-align:left;padding:0 0.8px;overflow:hidden">Project Milestones</div>
<div style="left:927px;top:207.5px;width:20px;height:7.84px;background:#9bc2e6;border-left:0.9px solid #3d4654;border-bottom:0.9px solid #3d4654"></div>
<div style="left:828px;top:343.3px;width:119px;height:9.2px;background:#9bc2e6;border-top:0.9px solid #4d5d70;border-bottom:0.9px solid #4d5d70"></div>
<div style="left:828px;top:359.6px;width:33px;height:8.9px;background:#9bc2e6;border-top:0.9px solid #4d5d70;border-bottom:0.9px solid #4d5d70"></div>
<div style="left:861px;top:359.6px;width:86px;height:8.9px;background:#333f50"></div>
<div class="t" style="left:861px;top:359.6px;width:86px;height:8.9px;line-height:8.9px;font-size:6.4px;font-weight:700;color:#ffffff;text-align:left;padding:0 0.8px;overflow:hidden">Starting the Project (SP) Start</div>
<div style="left:861px;top:375.86px;width:22.4px;height:7.36px;background:#7030a0"></div>
<div style="left:883.4px;top:376.16px;width:63.6px;height:6.76px;background:#f4f4f4"></div>
<div class="t" style="left:883.6px;top:375.86px;width:63.4px;height:7.36px;line-height:7.36px;font-size:5.9px;font-weight:400;color:#222;text-align:left;padding:0 0.8px;overflow:hidden">Appoint Project Executive</div>
<div style="left:872px;top:383.22px;width:66px;height:7.36px;background:#7030a0"></div>
<div class="t" style="left:938.5px;top:383.22px;width:8.5px;height:7.36px;line-height:7.36px;font-size:5.9px;font-weight:400;color:#222;text-align:left;padding:0 0.8px;overflow:hidden">Define</div>
<div style="left:905.3px;top:390.58px;width:21.3px;height:7.36px;background:#9bc2e6;border:0.8px solid #3d4654"></div>
<div style="left:926.6px;top:397.94px;width:20.4px;height:7.36px;background:#9bc2e6;border:0.8px solid #3d4654;border-right:none"></div>
<div style="left:947px;top:44px;width:13px;height:439px;background:#f7f7f7;border-left:0.7px solid #e4e4e4"></div>
<svg style="position:absolute;left:950px;top:46px" width="7" height="5" viewBox="0 0 7 5"><path d="M0.5 4.5L3.5 0.8 6.5 4.5z" fill="#5a5a5a"/></svg>
<div style="left:951.2px;top:53.6px;width:5px;height:95.7px;background:#727272;border-radius:2.5px"></div>
<svg style="position:absolute;left:950px;top:475px" width="7" height="5" viewBox="0 0 7 5"><path d="M0.5 0.5L3.5 4.2 6.5 0.5z" fill="#5a5a5a"/></svg>
<div style="left:0px;top:483px;width:960px;height:18px;background:#e9e9e9"></div>
<svg style="position:absolute;left:15.5px;top:488.5px" width="5" height="8" viewBox="0 0 5 8"><path d="M4 0.8L1 4l3 3.2" fill="none" stroke="#9a9a9a" stroke-width="0.9"/></svg>
<svg style="position:absolute;left:36px;top:488.5px" width="5" height="8" viewBox="0 0 5 8"><path d="M1 0.8L4 4 1 7.2" fill="none" stroke="#555" stroke-width="0.9"/></svg>
<div style="left:70px;top:483px;width:69.7px;height:16.5px;background:#ffffff;border-radius:0 0 3px 3px"></div>
<div class="t" style="left:70px;top:485px;width:69.7px;height:13px;line-height:13px;font-size:8.4px;font-weight:700;color:#1e1e1e;text-align:center;padding:0 0px;">Timeline Gantt</div>
<div style="left:75.5px;top:496.2px;width:58.5px;height:1.4px;background:#3b8a5e;border-radius:1px"></div>
<div class="t" style="left:141px;top:485.3px;width:144px;height:15px;line-height:15px;font-size:8.8px;font-weight:400;color:#333;text-align:center;padding:0 0px;">Migrate To Cloud Requirements</div>
<div class="t" style="left:282.5px;top:485.3px;width:76.5px;height:15px;line-height:15px;font-size:8.8px;font-weight:400;color:#333;text-align:center;padding:0 0px;">Apps To Cloud</div>
<div class="t" style="left:356.5px;top:485.3px;width:49px;height:15px;line-height:15px;font-size:8.8px;font-weight:400;color:#333;text-align:center;padding:0 0px;">Tasking</div>
<div class="t" style="left:403px;top:485.3px;width:83px;height:15px;line-height:15px;font-size:8.8px;font-weight:400;color:#333;text-align:center;padding:0 0px;">OBD Breakdown</div>
<div class="t" style="left:482.5px;top:485.3px;width:45px;height:15px;line-height:15px;font-size:8.8px;font-weight:400;color:#333;text-align:center;padding:0 0px;">Charts</div>
<div style="left:283px;top:484px;width:1px;height:16px;background:#d6d6d6"></div>
<div style="left:357px;top:484px;width:1px;height:16px;background:#d6d6d6"></div>
<div style="left:405px;top:484px;width:1px;height:16px;background:#d6d6d6"></div>
<div style="left:484px;top:484px;width:1px;height:16px;background:#d6d6d6"></div>
<div style="left:525px;top:484px;width:1px;height:16px;background:#d6d6d6"></div>
<div class="t" style="left:530px;top:485px;width:15px;height:15px;line-height:15px;font-size:9px;font-weight:700;color:#222;text-align:center;padding:0 0px;">&middot;&middot;&middot;</div>
<div class="t" style="left:551px;top:484px;width:13px;height:15px;line-height:15px;font-size:10px;font-weight:400;color:#333;text-align:center;padding:0 0px;">+</div>
<div class="t" style="left:572px;top:484px;width:11px;height:15px;line-height:15px;font-size:8px;font-weight:400;color:#333;text-align:center;padding:0 0px;">&#8942;</div>
<div style="left:588.5px;top:486.5px;width:363.5px;height:10.5px;background:#f7f7f7;border-radius:5px"></div>
<svg style="position:absolute;left:590.5px;top:489.5px" width="4" height="5" viewBox="0 0 4 5"><path d="M3.5 0.3L0.5 2.5l3 2.2z" fill="#444"/></svg>
<div style="left:598.5px;top:490.2px;width:97.5px;height:4px;background:#7f7f7f;border-radius:2px"></div>
<svg style="position:absolute;left:941px;top:489.5px" width="4" height="5" viewBox="0 0 4 5"><path d="M0.5 0.3L3.5 2.5l-3 2.2z" fill="#444"/></svg>
<div style="left:0px;top:501px;width:960px;height:11px;background:#f3f3f3"></div>
<div class="t" style="left:5px;top:501.5px;width:35px;height:10.5px;line-height:10.5px;font-size:6.3px;font-weight:400;color:#444;text-align:left;padding:0 0px;">Ready</div>
<svg style="position:absolute;left:35px;top:503px" width="9" height="8" viewBox="0 0 9 8"><g fill="none" stroke="#555" stroke-width="0.8"><rect x="0.5" y="0.5" width="7.5" height="6" /><path d="M0.5 2.2h7.5"/><circle cx="5.5" cy="5" r="1.6"/></g></svg>
<svg style="position:absolute;left:55px;top:502.5px" width="9" height="9" viewBox="0 0 9 9"><g fill="none" stroke="#555" stroke-width="0.8"><circle cx="4" cy="1.6" r="1"/><path d="M1 3.3h6M4 3.3v2.4L2.3 8.5M4 5.7l1.3 2"/><path d="M5.8 6l2.6 2.6M8.4 6L5.8 8.6"/></g></svg>
<div class="t" style="left:65.8px;top:501.5px;width:84.2px;height:10.5px;line-height:10.5px;font-size:6.35px;font-weight:700;color:#333;text-align:left;padding:0 0px;">Accessibility: Investigate</div>
<div style="left:777px;top:501px;width:26px;height:11px;background:#e2e2e2"></div>
<svg style="position:absolute;left:785px;top:502.5px" width="9" height="8" viewBox="0 0 9 8"><g fill="none" stroke="#444" stroke-width="0.8"><rect x="0.5" y="0.5" width="8" height="7"/><path d="M0.5 2.8h8M0.5 5.2h8M3.2 0.5v7M5.8 0.5v7"/></g></svg>
<svg style="position:absolute;left:810px;top:502.5px" width="10" height="8" viewBox="0 0 10 8"><g fill="none" stroke="#555" stroke-width="0.8"><rect x="0.5" y="0.5" width="9" height="7" rx="1"/><rect x="2.3" y="2" width="5.4" height="4"/></g></svg>
<svg style="position:absolute;left:835px;top:502.5px" width="10" height="8" viewBox="0 0 10 8"><g fill="none" stroke="#555" stroke-width="0.8"><path d="M0.5 0.5h9v7h-9z"/><path d="M3.5 0.5v3.5h3v-3.5"/></g></svg>
<div style="left:856px;top:506.5px;width:4.5px;height:1px;background:#666"></div>
<div style="left:864px;top:506px;width:63px;height:1px;background:#9a9a9a"></div>
<div style="left:883.3px;top:503.6px;width:2.3px;height:6.2px;background:#555;border-radius:0.6px"></div>
<div style="left:894.5px;top:505.2px;width:0.8px;height:3px;background:#888"></div>
<div class="t" style="left:927px;top:501.5px;width:10px;height:10.5px;line-height:10.5px;font-size:8px;font-weight:400;color:#555;text-align:center;padding:0 0px;">+</div>
<div class="t" style="left:940px;top:501.5px;width:18px;height:10.5px;line-height:10.5px;font-size:6.6px;font-weight:400;color:#555;text-align:left;padding:0 1.5px;">66%</div>
</body></html>
